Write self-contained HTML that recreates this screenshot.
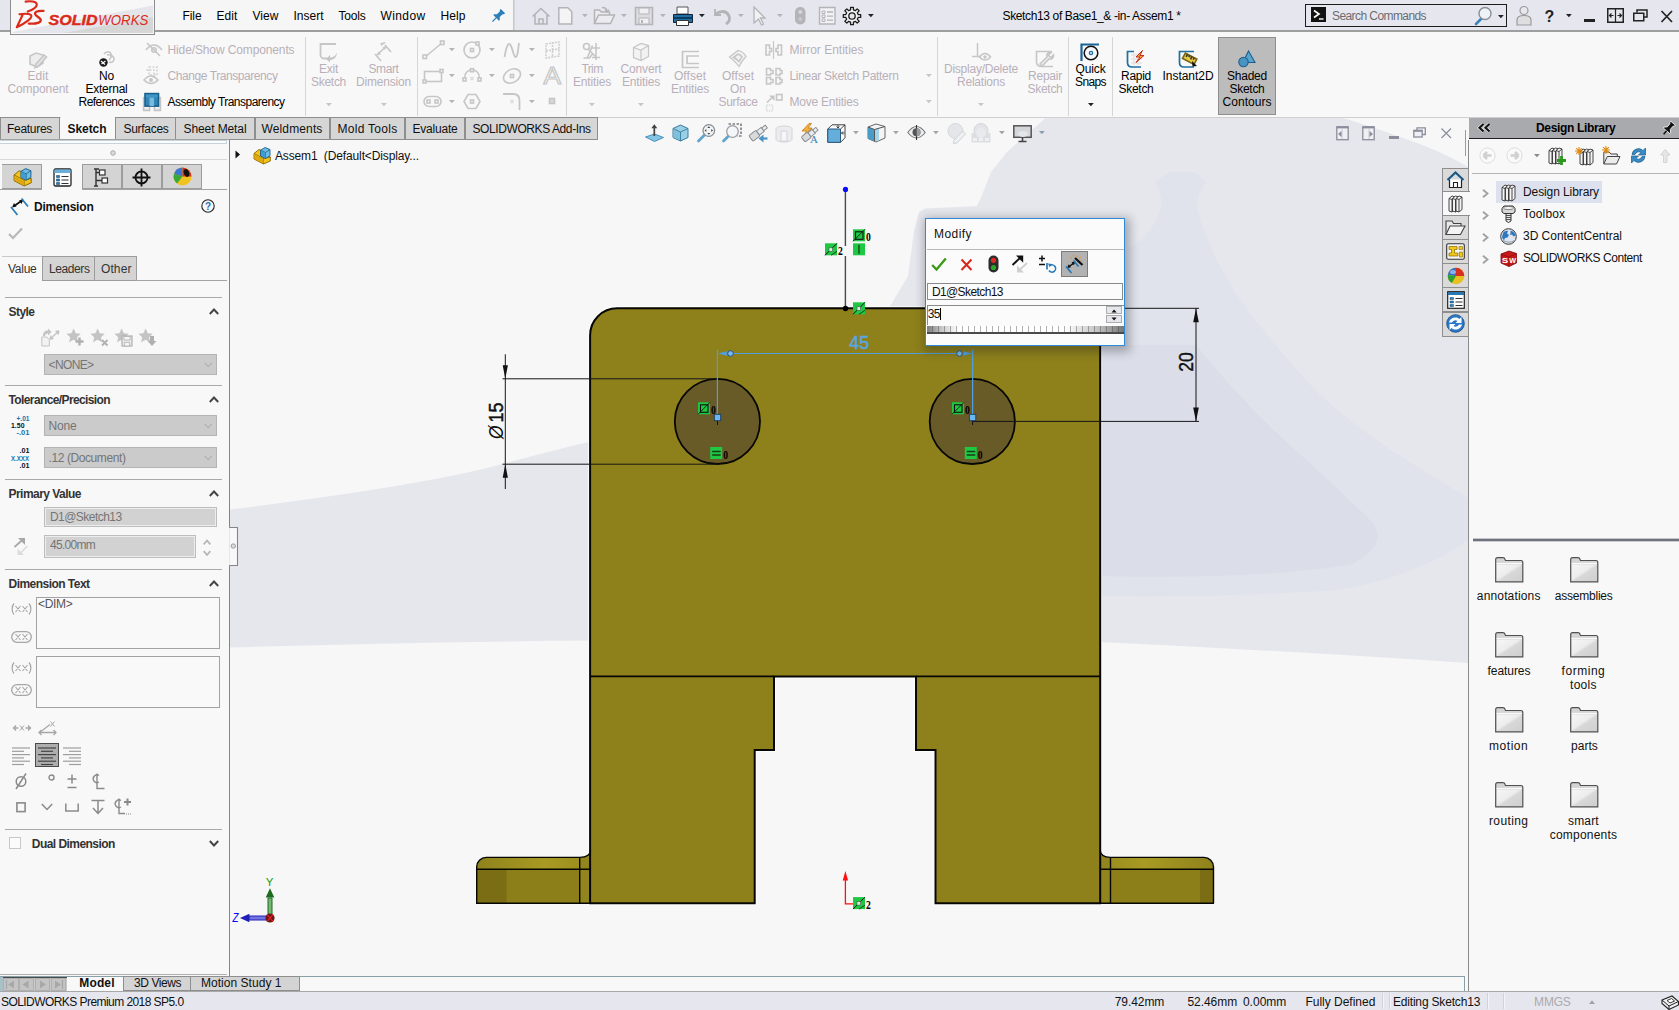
<!DOCTYPE html>
<html><head><meta charset="utf-8"><title>SOLIDWORKS</title>
<style>
html,body{margin:0;padding:0;}
body{width:1679px;height:1010px;overflow:hidden;background:#f7f7f7;position:relative;font:12px/14px "Liberation Sans",sans-serif;color:#000;}
.t{position:absolute;white-space:pre;font-size:12px;line-height:14px;font-family:"Liberation Sans",sans-serif;}
svg{overflow:visible;}
.rb svg{stroke-width:1.600px;}
</style></head><body>
<!-- g_title -->
<div style="position:absolute;left:0px;top:0px;width:1679px;height:30px;background:#e6e7ee;"></div>
<div style="position:absolute;left:0px;top:30px;width:1679px;height:1.5px;background:#9e9e9e;"></div>
<div style="position:absolute;left:155px;top:0px;width:358px;height:30px;background:#f6f6f6;"></div>
<div style="position:absolute;left:513px;top:0px;width:2px;height:30px;background:linear-gradient(90deg,#bfbfc4,#dcdde3);"></div>
<div style="position:absolute;left:155px;top:0px;width:358px;height:30px;background:#f6f6f6;"></div>
<div style="position:absolute;left:513px;top:0px;width:2px;height:30px;background:linear-gradient(90deg,#bfbfc4,#dcdde3);"></div>
<div style="position:absolute;left:10px;top:0px;width:144px;height:34px;background:linear-gradient(172deg,#ffffff 0%,#fdfdfd 48%,#dcdcdc 52%,#d4d4d4 100%);border:1px solid #8c8c8c;border-top:none;box-sizing:border-box;"></div>
<svg style="position:absolute;left:16px;top:0px;" width="140" height="32" viewBox="0 0 140 32"><g fill="none" stroke="#da291c" stroke-width="1.7" stroke-linecap="round" stroke-linejoin="round">
<path d="M8.5 3.2 C12 1.6 16.5 2 16.8 5.2 C17 8 13 11 8 13.2"/>
<path d="M12.2 3.5 L6.5 25.5 L1.2 25.8 C6 22 12 17 14.5 12"/>
<path d="M20.5 11.2 C17.5 10.2 13.2 11.2 13.2 14 C13.2 16.5 19.5 17 19.5 19.8 C19.5 22.6 14 22.8 11 21.6"/>
</g>
<text x="32" y="24.5" font-family="Liberation Sans,sans-serif" font-size="15.5" font-weight="bold" font-style="italic" fill="#da291c" textLength="56" lengthAdjust="spacingAndGlyphs">SOLID</text>
<text x="88.5" y="24.5" font-family="Liberation Sans,sans-serif" font-size="15.5" font-style="italic" fill="#da291c" textLength="44" lengthAdjust="spacingAndGlyphs">WORKS</text></svg>
<span class="t" style="left:182.5px;top:9.3px;letter-spacing:-0.084px;">File</span>
<span class="t" style="left:216.5px;top:9.3px;letter-spacing:0.081px;">Edit</span>
<span class="t" style="left:252.5px;top:9.3px;letter-spacing:0.052px;">View</span>
<span class="t" style="left:293.5px;top:9.3px;letter-spacing:-0.002px;">Insert</span>
<span class="t" style="left:338.5px;top:9.3px;letter-spacing:-0.202px;">Tools</span>
<span class="t" style="left:380.5px;top:9.3px;letter-spacing:0.387px;">Window</span>
<span class="t" style="left:440.5px;top:9.3px;letter-spacing:0.080px;">Help</span>
<svg style="position:absolute;left:489px;top:7px;" width="18" height="18" viewBox="0 0 18 18"><g transform="rotate(45 9 9)"><path d="M6 2h6v1.5l-1 1v4l2 2v1.2H5V10.5l2-2v-4l-1-1z" fill="#2c7fb8"/><path d="M9 11.7V17" stroke="#2c7fb8" stroke-width="1.3"/></g></svg>
<svg style="position:absolute;left:531px;top:6px;" width="20" height="20" viewBox="0 0 20 20"><path d="M1.5 10.5L10 2.5l8.5 8M4 9v9h12V9M8 18v-5h4v5" fill="none" stroke="#b4b4b8" stroke-width="1.6"/></svg>
<svg style="position:absolute;left:557px;top:6px;" width="18" height="20" viewBox="0 0 18 20"><path d="M1.8 1.8h9l4 4V18H1.8z" fill="#f4f4f6" stroke="#b4b4b8" stroke-width="1.5"/></svg>
<svg style="position:absolute;left:582.1px;top:13.5px" width="5.8" height="3.2"><path d="M0 0H5.8L2.9 3.2Z" fill="#b4b4b8"/></svg>
<svg style="position:absolute;left:593px;top:6px;" width="24" height="20" viewBox="0 0 24 20"><path d="M1.5 17.5V4h5l2 2h8v3M1.5 17.5l4-8.5h16l-4 8.5z" fill="#ececf0" stroke="#b4b4b8" stroke-width="1.5"/><path d="M9 1.5c3 0 5 1 5 4M12 4l2 2 2-2.3" fill="none" stroke="#b4b4b8" stroke-width="1.3"/></svg>
<svg style="position:absolute;left:621.1px;top:13.5px" width="5.8" height="3.2"><path d="M0 0H5.8L2.9 3.2Z" fill="#b4b4b8"/></svg>
<svg style="position:absolute;left:634px;top:6px;" width="20" height="20" viewBox="0 0 20 20"><path d="M1.5 1.5h17v17h-17z" fill="#dcdce0" stroke="#b4b4b8" stroke-width="1.5"/><path d="M5 2h10v6H5zM5 12h10v6H5z" fill="#f0f0f3" stroke="#b4b4b8"/><path d="M7 14h2v3H7z" fill="#b4b4b8"/></svg>
<svg style="position:absolute;left:660.1px;top:13.5px" width="5.8" height="3.2"><path d="M0 0H5.8L2.9 3.2Z" fill="#b4b4b8"/></svg>
<svg style="position:absolute;left:672px;top:5px;" width="22" height="22" viewBox="0 0 22 22"><path d="M5 2h11v7H5z" fill="#fff" stroke="#555" stroke-width="1"/><path d="M1.5 9.5h19v8h-19z" fill="#1d6fa5" stroke="#123" stroke-width="1"/><path d="M1.5 13h19" stroke="#0b3c5d" stroke-width="2"/><path d="M4.5 15.5h12v5h-12z" fill="#fff" stroke="#333" stroke-width="1"/></svg>
<svg style="position:absolute;left:699.1px;top:13.5px" width="5.8" height="3.2"><path d="M0 0H5.8L2.9 3.2Z" fill="#222"/></svg>
<svg style="position:absolute;left:711px;top:6px;" width="22" height="20" viewBox="0 0 22 20"><path d="M4 3v6h6" fill="none" stroke="#b4b4b8" stroke-width="1.8"/><path d="M4.5 9c3-4 10-5 13 0 2 3.5 1 7-2.500 9" fill="none" stroke="#b4b4b8" stroke-width="3"/></svg>
<svg style="position:absolute;left:738.1px;top:13.5px" width="5.8" height="3.2"><path d="M0 0H5.8L2.9 3.2Z" fill="#b4b4b8"/></svg>
<svg style="position:absolute;left:752px;top:5px;" width="18" height="22" viewBox="0 0 18 22"><path d="M2 2l11 11H8.500l3 6-2 1-3-6-4.500 4z" fill="#f2f2f5" stroke="#b4b4b8" stroke-width="1.3"/></svg>
<svg style="position:absolute;left:777.1px;top:13.5px" width="5.8" height="3.2"><path d="M0 0H5.8L2.9 3.2Z" fill="#b4b4b8"/></svg>
<svg style="position:absolute;left:794px;top:6px;" width="13" height="20" viewBox="0 0 13 20"><rect x="1" y="1" width="10.500" height="17.500" rx="5" fill="#b4b4b8"/><circle cx="6.300" cy="6" r="2" fill="#d6d6da"/><circle cx="6.300" cy="13" r="2" fill="#c8c8cc"/></svg>
<svg style="position:absolute;left:818px;top:6px;" width="19" height="20" viewBox="0 0 19 20"><path d="M1.5 1.500h15.500v16.500H1.500z" fill="#f2f2f5" stroke="#b4b4b8" stroke-width="1.4"/><path d="M4 5h3v2.500H4zM4 9h3v2.500H4zM4 13h3v2.500H4z" fill="none" stroke="#b4b4b8"/><path d="M9 6h6M9 10.200h6M9 14.200h6" stroke="#b4b4b8" stroke-width="1.300"/></svg>
<svg style="position:absolute;left:842px;top:6px;" width="20" height="20" viewBox="0 0 20 20"><g transform="translate(10 10)"><path d="M-1.42 -6.14L-1.38 -8.69L1.38 -8.69L1.42 -6.14L3.34 -5.34L5.17 -7.12L7.12 -5.17L5.34 -3.34L6.14 -1.42L8.69 -1.38L8.69 1.38L6.14 1.42L5.34 3.34L7.12 5.17L5.17 7.12L3.34 5.34L1.42 6.14L1.38 8.69L-1.38 8.69L-1.42 6.14L-3.34 5.34L-5.17 7.12L-7.12 5.17L-5.34 3.34L-6.14 1.42L-8.69 1.38L-8.69 -1.38L-6.14 -1.42L-5.34 -3.34L-7.12 -5.17L-5.17 -7.12L-3.34 -5.34Z" fill="#f2f2f4" stroke="#1c1c1c" stroke-width="1.300" stroke-linejoin="round"/><circle r="3.200" fill="#e6e7ee" stroke="#1c1c1c" stroke-width="1.300"/></g></svg>
<svg style="position:absolute;left:868.1px;top:13.5px" width="5.8" height="3.2"><path d="M0 0H5.8L2.9 3.2Z" fill="#222"/></svg>
<span class="t" style="left:1002.5px;top:8.8px;letter-spacing:-0.366px;">Sketch13 of Base1_&amp; -in- Assem1 *</span>
<div style="position:absolute;left:1305px;top:4px;width:202px;height:22.5px;border:1.5px solid #1c1c1c;box-sizing:border-box;background:#e6e7ee;"></div>
<svg style="position:absolute;left:1311px;top:7px;" width="15" height="15" viewBox="0 0 15 15"><rect width="15" height="15" fill="#111"/><path d="M3 3.500l5 3.500-5 3.500" fill="none" stroke="#fff" stroke-width="1.600"/><path d="M8 12h4.500" stroke="#fff" stroke-width="1.400"/></svg>
<span class="t" style="left:1332.0px;top:8.8px;letter-spacing:-0.580px;color:#6c6c70;">Search Commands</span>
<svg style="position:absolute;left:1474px;top:6px;" width="19" height="19" viewBox="0 0 19 19"><path d="M8.500 11.500L2 18" stroke="#3b83bd" stroke-width="2.600" stroke-linecap="round"/><circle cx="11" cy="7.500" r="6" fill="#eef3f8" stroke="#8a8f96" stroke-width="1.400"/></svg>
<svg style="position:absolute;left:1497.6px;top:14.5px" width="5.8" height="3.2"><path d="M0 0H5.8L2.9 3.2Z" fill="#222"/></svg>
<svg style="position:absolute;left:1516px;top:5px;" width="16" height="21" viewBox="0 0 16 21"><circle cx="8" cy="5.500" r="4" fill="#e8e8ea" stroke="#9a9a9e" stroke-width="1.200"/><path d="M1 20v-5c0-3 3-4.500 7-4.500s7 1.500 7 4.500v5z" fill="#dedee0" stroke="#9a9a9e" stroke-width="1.200"/></svg>
<span class="t" style="left:1544.6px;top:9.5px;letter-spacing:0.000px;color:#222;font-weight:bold;font-size:16px;">?</span>
<svg style="position:absolute;left:1565.6px;top:13.5px" width="5.8" height="3.2"><path d="M0 0H5.8L2.9 3.2Z" fill="#222"/></svg>
<div style="position:absolute;left:1584px;top:19px;width:10.5px;height:3px;background:#222;"></div>
<svg style="position:absolute;left:1607px;top:8px;" width="17" height="15" viewBox="0 0 17 15"><rect x="0.750" y="0.750" width="15.500" height="13.500" fill="none" stroke="#222" stroke-width="1.500"/><path d="M8.500 1v13M2.500 7.500h4M10.500 7.500h4M4.500 5.500l-2 2 2 2M12.500 5.500l2 2-2 2" fill="none" stroke="#222" stroke-width="1.200"/></svg>
<svg style="position:absolute;left:1633px;top:9px;" width="15" height="13" viewBox="0 0 15 13"><path d="M4 3.500V1h10v7h-3" fill="none" stroke="#222" stroke-width="1.500"/><rect x="0.750" y="4.250" width="10" height="7.500" fill="none" stroke="#222" stroke-width="1.500"/></svg>
<svg style="position:absolute;left:1660px;top:10px;" width="14" height="13" viewBox="0 0 14 13"><path d="M1.500 1l10.500 11M12 1L1.500 12" stroke="#222" stroke-width="1.700"/></svg>
<!-- g_ribbon -->
<div class="rb"><div style="position:absolute;left:0px;top:31.5px;width:1679px;height:86px;background:#f8f8f8;"></div>
<div style="position:absolute;left:0px;top:116.5px;width:1679px;height:1.5px;background:#cfcfcf;"></div>
<span class="t" style="left:27.5px;top:68.8px;letter-spacing:0.081px;color:#b8b0b8;">Edit</span><span class="t" style="left:7.5px;top:81.8px;letter-spacing:-0.115px;color:#b8b0b8;">Component</span>
<span class="t" style="left:99.0px;top:68.8px;letter-spacing:-0.170px;">No</span><span class="t" style="left:85.5px;top:81.8px;letter-spacing:-0.252px;">External</span><span class="t" style="left:78.5px;top:94.8px;letter-spacing:-0.536px;">References</span>
<span class="t" style="left:167.5px;top:42.8px;letter-spacing:-0.120px;color:#b8b0b8;">Hide/Show Components</span>
<span class="t" style="left:167.5px;top:68.8px;letter-spacing:-0.424px;color:#b8b0b8;">Change Transparency</span>
<span class="t" style="left:167.5px;top:94.8px;letter-spacing:-0.526px;">Assembly Transparency</span>
<span class="t" style="left:319.0px;top:61.8px;letter-spacing:-0.251px;color:#b8b0b8;">Exit</span><span class="t" style="left:311.0px;top:74.8px;letter-spacing:-0.281px;color:#b8b0b8;">Sketch</span>
<span class="t" style="left:368.5px;top:61.8px;letter-spacing:-0.400px;color:#b8b0b8;">Smart</span><span class="t" style="left:356.0px;top:74.8px;letter-spacing:-0.187px;color:#b8b0b8;">Dimension</span>
<svg style="position:absolute;left:325.6px;top:102.5px" width="5.8" height="3.2"><path d="M0 0H5.8L2.9 3.2Z" fill="#c6c6c6"/></svg>
<svg style="position:absolute;left:380.6px;top:102.5px" width="5.8" height="3.2"><path d="M0 0H5.8L2.9 3.2Z" fill="#c6c6c6"/></svg>
<span class="t" style="left:581.5px;top:61.8px;letter-spacing:-0.636px;color:#b8b0b8;">Trim</span><span class="t" style="left:573.0px;top:74.8px;letter-spacing:-0.169px;color:#b8b0b8;">Entities</span>
<span class="t" style="left:620.5px;top:61.8px;letter-spacing:-0.145px;color:#b8b0b8;">Convert</span><span class="t" style="left:622.0px;top:74.8px;letter-spacing:-0.169px;color:#b8b0b8;">Entities</span>
<svg style="position:absolute;left:588.6px;top:102.5px" width="5.8" height="3.2"><path d="M0 0H5.8L2.9 3.2Z" fill="#c6c6c6"/></svg>
<svg style="position:absolute;left:637.6px;top:102.5px" width="5.8" height="3.2"><path d="M0 0H5.8L2.9 3.2Z" fill="#c6c6c6"/></svg>
<span class="t" style="left:674.0px;top:68.8px;letter-spacing:0.035px;color:#b8b0b8;">Offset</span><span class="t" style="left:671.0px;top:81.8px;letter-spacing:-0.169px;color:#b8b0b8;">Entities</span>
<span class="t" style="left:722.0px;top:68.8px;letter-spacing:0.035px;color:#b8b0b8;">Offset</span><span class="t" style="left:730.0px;top:81.8px;letter-spacing:-0.003px;color:#b8b0b8;">On</span><span class="t" style="left:718.5px;top:94.8px;letter-spacing:-0.336px;color:#b8b0b8;">Surface</span>
<span class="t" style="left:789.5px;top:42.8px;letter-spacing:-0.000px;color:#b8b0b8;">Mirror Entities</span>
<span class="t" style="left:789.5px;top:68.8px;letter-spacing:-0.304px;color:#b8b0b8;">Linear Sketch Pattern</span>
<span class="t" style="left:789.5px;top:94.8px;letter-spacing:-0.233px;color:#b8b0b8;">Move Entities</span>
<svg style="position:absolute;left:925.6px;top:73.5px" width="5.8" height="3.2"><path d="M0 0H5.8L2.9 3.2Z" fill="#c6c6c6"/></svg>
<svg style="position:absolute;left:925.6px;top:99.5px" width="5.8" height="3.2"><path d="M0 0H5.8L2.9 3.2Z" fill="#c6c6c6"/></svg>
<span class="t" style="left:944.0px;top:61.8px;letter-spacing:-0.240px;color:#b8b0b8;">Display/Delete</span><span class="t" style="left:957.0px;top:74.8px;letter-spacing:-0.225px;color:#b8b0b8;">Relations</span>
<svg style="position:absolute;left:977.6px;top:102.5px" width="5.8" height="3.2"><path d="M0 0H5.8L2.9 3.2Z" fill="#c6c6c6"/></svg>
<span class="t" style="left:1028.0px;top:68.8px;letter-spacing:-0.225px;color:#b8b0b8;">Repair</span><span class="t" style="left:1027.5px;top:81.8px;letter-spacing:-0.281px;color:#b8b0b8;">Sketch</span>
<span class="t" style="left:1075.5px;top:61.8px;letter-spacing:-0.135px;">Quick</span><span class="t" style="left:1075.0px;top:74.8px;letter-spacing:-0.605px;">Snaps</span>
<svg style="position:absolute;left:1087.6px;top:102.5px" width="5.8" height="3.2"><path d="M0 0H5.8L2.9 3.2Z" fill="#222"/></svg>
<div style="position:absolute;left:1218px;top:37px;width:58px;height:78px;background:#bcbcbc;border:1px solid #8e8e8e;box-sizing:border-box;"></div>
<span class="t" style="left:1121.0px;top:68.8px;letter-spacing:-0.270px;">Rapid</span><span class="t" style="left:1118.5px;top:81.8px;letter-spacing:-0.281px;">Sketch</span>
<span class="t" style="left:1162.5px;top:68.8px;letter-spacing:-0.040px;">Instant2D</span>
<span class="t" style="left:1227.0px;top:68.8px;letter-spacing:-0.228px;">Shaded</span><span class="t" style="left:1229.5px;top:81.8px;letter-spacing:-0.281px;">Sketch</span><span class="t" style="left:1222.5px;top:94.8px;letter-spacing:0.039px;">Contours</span>
<div style="position:absolute;left:305px;top:37px;width:1px;height:79px;background:#d6d6d6;"></div>
<div style="position:absolute;left:417px;top:37px;width:1px;height:79px;background:#d6d6d6;"></div>
<div style="position:absolute;left:566px;top:37px;width:1px;height:79px;background:#d6d6d6;"></div>
<div style="position:absolute;left:937px;top:37px;width:1px;height:79px;background:#d6d6d6;"></div>
<div style="position:absolute;left:1068px;top:37px;width:1px;height:79px;background:#d6d6d6;"></div>
<div style="position:absolute;left:1112px;top:37px;width:1px;height:79px;background:#d6d6d6;"></div>
<svg style="position:absolute;left:28px;top:50px;" width="20" height="20" viewBox="0 0 20 20"><path d="M2 6l6-3 7 2v8l-6 4-7-3z" fill="#ededed" stroke="#c6c6c6"/><path d="M8 14l8-9 2.500 2-8 9-3.500 1.500z" fill="#e4e4e4" stroke="#c6c6c6"/></svg>
<svg style="position:absolute;left:98px;top:50px;" width="20" height="20" viewBox="0 0 20 20"><path d="M6 4c2-3 6-3 7 0s-1 5-2 6M9 5c3-1 7 1 7 4s-3 4-5 3" fill="none" stroke="#c6c6c6" stroke-width="1.600"/><circle cx="5.500" cy="12.500" r="4.200" fill="#1a1a1a"/><path d="M3 11l4 3.500M3.500 14l4-3" stroke="#fff" stroke-width="1.200"/></svg>
<svg style="position:absolute;left:145px;top:42px;" width="18" height="16" viewBox="0 0 18 16"><path d="M1 8c3-4 6-5 8-5s5 1 8 5" fill="none" stroke="#c6c6c6"/><circle cx="9" cy="8" r="2.200" fill="none" stroke="#c6c6c6"/><path d="M2 1l13 13" stroke="#c6c6c6" stroke-width="1.600"/></svg>
<svg style="position:absolute;left:143px;top:66px;" width="20" height="20" viewBox="0 0 20 20"><path d="M6 1h8v8H6zM3 4h8v8" fill="none" stroke="#c6c6c6" stroke-dasharray="2 1.500" opacity=".7"/><path d="M1 14c3-3.500 5-4 7-4s4 .500 7 4c-3 3-5 3.500-7 3.500S4 17 1 14z" fill="none" stroke="#c6c6c6"/><circle cx="8" cy="14" r="2" fill="#c6c6c6"/></svg>
<svg style="position:absolute;left:143px;top:93px;" width="18" height="18" viewBox="0 0 18 18"><path d="M0.600 4.600h6v12.800h-6zM11.400 4.600h6v12.800h-6z" fill="#f0f0f0" stroke="#c4c4c4"/><rect x="2" y="0.600" width="13.500" height="12.500" fill="#2f86b8" stroke="#1c5f88"/><path d="M6.500 4.500h4.500v8.600H6.500z" fill="#7db9da"/><path d="M3 1.500h11.500v3H3z" fill="#3f97c8"/></svg>
<svg style="position:absolute;left:319px;top:43px;" width="20" height="19" viewBox="0 0 20 19"><path d="M17 1H1.500v11c0 2 2 3.500 4 3.500h3" fill="none" stroke="#c6c6c6" stroke-width="1.800"/><path d="M18 9c-1 4-4 5.500-7 5.500v-2.500l-4 4 4 3.500v-2.500c4 0 7-3 7-8z" fill="#c6c6c6"/></svg>
<svg style="position:absolute;left:373px;top:42px;" width="20" height="20" viewBox="0 0 20 20"><path d="M2 12l6 7M12 3l6 7M4 13l9-8.500" fill="none" stroke="#c6c6c6" stroke-width="1.600"/><path d="M4 13l4-.500-2.500-3zM13.500 4.500l-4 .500 2.500 3z" fill="#c6c6c6"/><path d="M9 2l3-1.500M8 1l1 2.500" fill="none" stroke="#c6c6c6"/></svg>
<svg style="position:absolute;left:422px;top:40px;" width="24" height="20" viewBox="0 0 24 20"><path d="M3 17L20 3" fill="none" stroke="#c6c6c6" stroke-width="1.500"/><rect x="1" y="15" width="3.500" height="3.500" fill="#f8f8f8" stroke="#c6c6c6"/><rect x="18.500" y="1" width="3.500" height="3.500" fill="#f8f8f8" stroke="#c6c6c6"/></svg>
<svg style="position:absolute;left:422px;top:68px;" width="24" height="16" viewBox="0 0 24 16"><rect x="2.500" y="3.500" width="17" height="10" fill="none" stroke="#c6c6c6" stroke-width="1.600"/><rect x="1" y="12" width="3" height="3" fill="#f8f8f8" stroke="#c6c6c6"/><rect x="18" y="1.500" width="3" height="3" fill="#f8f8f8" stroke="#c6c6c6"/></svg>
<svg style="position:absolute;left:423px;top:95px;" width="20" height="13" viewBox="0 0 20 13"><rect x="1" y="1.500" width="17" height="10" rx="5" fill="none" stroke="#c6c6c6" stroke-width="1.600"/><rect x="4" y="5" width="3" height="3" fill="none" stroke="#c6c6c6"/><rect x="12" y="5" width="3" height="3" fill="none" stroke="#c6c6c6"/></svg>
<svg style="position:absolute;left:448.6px;top:47.5px" width="5.8" height="3.2"><path d="M0 0H5.8L2.9 3.2Z" fill="#b4b4b4"/></svg>
<svg style="position:absolute;left:448.6px;top:73.5px" width="5.8" height="3.2"><path d="M0 0H5.8L2.9 3.2Z" fill="#b4b4b4"/></svg>
<svg style="position:absolute;left:448.6px;top:99.5px" width="5.8" height="3.2"><path d="M0 0H5.8L2.9 3.2Z" fill="#b4b4b4"/></svg>
<svg style="position:absolute;left:462px;top:40px;" width="20" height="19" viewBox="0 0 20 19"><circle cx="10" cy="10" r="8" fill="none" stroke="#c6c6c6" stroke-width="1.600"/><rect x="8.500" y="8.500" width="3" height="3" fill="none" stroke="#c6c6c6"/><rect x="14" y="2" width="3" height="3" fill="#f8f8f8" stroke="#c6c6c6"/></svg>
<svg style="position:absolute;left:462px;top:68px;" width="20" height="14" viewBox="0 0 20 14"><path d="M2.500 10C3 4 6 2 10 2s7 2 7.500 8" fill="none" stroke="#c6c6c6" stroke-width="1.500"/><rect x="1" y="10" width="3" height="3" fill="#f8f8f8" stroke="#c6c6c6"/><rect x="16" y="10" width="3" height="3" fill="#f8f8f8" stroke="#c6c6c6"/><rect x="8.500" y="0.700" width="3" height="3" fill="#f8f8f8" stroke="#c6c6c6"/><path d="M8.500 9l3 3M11.500 9l-3 3" stroke="#dcdcdc"/></svg>
<svg style="position:absolute;left:463px;top:93px;" width="18" height="17" viewBox="0 0 18 17"><path d="M5 1.500h8l4 7-4 7H5l-4-7z" fill="none" stroke="#c6c6c6" stroke-width="1.600"/><rect x="7.500" y="7" width="3" height="3" fill="none" stroke="#c6c6c6"/></svg>
<svg style="position:absolute;left:488.6px;top:47.5px" width="5.8" height="3.2"><path d="M0 0H5.8L2.9 3.2Z" fill="#b4b4b4"/></svg>
<svg style="position:absolute;left:488.6px;top:73.5px" width="5.8" height="3.2"><path d="M0 0H5.8L2.9 3.2Z" fill="#b4b4b4"/></svg>
<svg style="position:absolute;left:503px;top:41px;" width="18" height="18" viewBox="0 0 18 18"><path d="M1.500 16C4 2 6 1 8 5s3 12 5 11S15 8 16 2" fill="none" stroke="#c6c6c6" stroke-width="1.800"/></svg>
<svg style="position:absolute;left:502px;top:67px;" width="20" height="18" viewBox="0 0 20 18"><ellipse cx="10" cy="9" rx="9" ry="6.500" transform="rotate(-30 10 9)" fill="none" stroke="#c6c6c6" stroke-width="1.600"/><rect x="8.500" y="7.500" width="3" height="3" fill="none" stroke="#c6c6c6"/></svg>
<svg style="position:absolute;left:503px;top:93px;" width="18" height="18" viewBox="0 0 18 18"><path d="M0 1h10c4 0 6.500 2.500 6.500 6.500V17" fill="none" stroke="#c6c6c6" stroke-width="1.800"/><path d="M7.500 7l3 3M10.500 7l-3 3" stroke="#dcdcdc"/></svg>
<svg style="position:absolute;left:528.6px;top:47.5px" width="5.8" height="3.2"><path d="M0 0H5.8L2.9 3.2Z" fill="#b4b4b4"/></svg>
<svg style="position:absolute;left:528.6px;top:73.5px" width="5.8" height="3.2"><path d="M0 0H5.8L2.9 3.2Z" fill="#b4b4b4"/></svg>
<svg style="position:absolute;left:528.6px;top:99.5px" width="5.8" height="3.2"><path d="M0 0H5.8L2.9 3.2Z" fill="#b4b4b4"/></svg>
<svg style="position:absolute;left:545px;top:40px;" width="16" height="20" viewBox="0 0 16 20"><path d="M1 4l13-2v14l-13 2zM7.500 2v16M1 11l13-2" fill="none" stroke="#d0d0d0" stroke-dasharray="2 1"/></svg>
<svg style="position:absolute;left:543px;top:66px;" width="19" height="19" viewBox="0 0 19 19"><text x="0.500" y="17.500" font-family="Liberation Sans,sans-serif" font-size="23" fill="#f8f8f8" stroke="#c6c6c6" stroke-width="1.100" textLength="17.500" lengthAdjust="spacingAndGlyphs">A</text></svg>
<svg style="position:absolute;left:549px;top:98px;" width="6" height="6" viewBox="0 0 6 6"><rect x="0.500" y="0.500" width="5" height="5" fill="#d8d8d8" stroke="#c6c6c6"/></svg>
<svg style="position:absolute;left:582px;top:42px;" width="20" height="20" viewBox="0 0 20 20"><circle cx="4.500" cy="4.500" r="3" fill="none" stroke="#c6c6c6" stroke-width="1.600"/><path d="M6 7l8 8M1.500 16h6l3-4M10.500 3.500l-5 12" fill="none" stroke="#c6c6c6" stroke-width="1.600"/><path d="M14 1v17M10 6h8M10 15.500h8" fill="none" stroke="#c6c6c6"/></svg>
<svg style="position:absolute;left:632px;top:42px;" width="18" height="20" viewBox="0 0 18 20"><path d="M1.500 5.500L9 1.500l7.500 2v11L9 18.500l-7.500-3zM1.500 5.500L9 8l7.500-4.500M9 8v10.500" fill="#f2f2f2" stroke="#c6c6c6" stroke-width="1.200"/></svg>
<svg style="position:absolute;left:681px;top:50px;" width="19" height="19" viewBox="0 0 19 19"><path d="M18 1.500H1.500V17.500h16.500M18 6H6v7.500h12" fill="none" stroke="#c6c6c6" stroke-width="1.700"/></svg>
<svg style="position:absolute;left:728px;top:49px;" width="20" height="19" viewBox="0 0 20 19"><path d="M1.500 8L10 1.500c3 .500 6 2.500 8 6-2 2-5 6-7 10-3-4-6-7-9.500-9.500z" fill="#f2f2f2" stroke="#c6c6c6" stroke-width="1.200"/><path d="M5.500 8.500L10 5c2 .500 3 1.500 4 3-1 1-2 3-3 4.500-1.500-1.500-3-3-5.500-4z" fill="none" stroke="#c6c6c6"/></svg>
<svg style="position:absolute;left:765px;top:41px;" width="18" height="18" viewBox="0 0 18 18"><path d="M8.500 0v18" stroke="#c6c6c6" stroke-width="1.200"/><path d="M1 4h3.500v3.500H6.500v3H4.500V14H1zM16.500 4H13v3.500h-2v3h2V14h3.500z" fill="none" stroke="#c6c6c6"/></svg>
<svg style="position:absolute;left:765px;top:67px;" width="18" height="18" viewBox="0 0 18 18"><path d="M1.500 1.500h4v2h2.500v3H5.500v1.500h-4zM11 1.500h4v2h2v3h-2v1.500h-4zM1.500 10.500h4v2h2.500v3H5.500V17h-4zM11 10.500h4v2h2v3h-2V17h-4z" fill="none" stroke="#c6c6c6"/></svg>
<svg style="position:absolute;left:765px;top:93px;" width="18" height="19" viewBox="0 0 18 19"><path d="M2 9.500l6-6" fill="none" stroke="#c6c6c6" stroke-width="1.600"/><path d="M4 2.500h5.500V8z" fill="#c6c6c6"/><rect x="11.500" y="1.500" width="5.500" height="5.500" fill="none" stroke="#c6c6c6" stroke-width="1.600"/><path d="M1.500 12h6v6h-6z" fill="none" stroke="#d6d6d6" stroke-dasharray="1.200 1.200"/></svg>
<svg style="position:absolute;left:971px;top:42px;" width="20" height="20" viewBox="0 0 20 20"><path d="M6.500 1v13.500M1 14.500h11" fill="none" stroke="#c6c6c6" stroke-width="1.500"/><path d="M8.500 15c2-3 4-3.500 5.500-3.500s3.500.500 5.500 3.500c-2 2.500-4 3-5.500 3s-3.500-.500-5.500-3z" fill="#f8f8f8" stroke="#c6c6c6"/><circle cx="14" cy="15" r="1.700" fill="#c6c6c6"/></svg>
<svg style="position:absolute;left:1035px;top:50px;" width="20" height="19" viewBox="0 0 20 19"><path d="M17 1.500H1.500v10c0 3 2 5 5 5H18" fill="none" stroke="#c6c6c6" stroke-width="1.600"/><path d="M5 14l7-7c-1-2.500 1-5 4-4.500l-2.500 2.500 1 1.500 1.500 1 2.500-2.500c.500 3-2 5-4.500 4l-7 7z" fill="#f0f0f0" stroke="#c6c6c6"/></svg>
<svg style="position:absolute;left:1080px;top:43px;" width="20" height="19" viewBox="0 0 20 19"><path d="M1.500 18V1.500H19" fill="none" stroke="#1a6496" stroke-width="2.200"/><circle cx="11" cy="10" r="6.800" fill="none" stroke="#111" stroke-width="1.500"/><circle cx="11" cy="10" r="1.600" fill="none" stroke="#1d6fa5" stroke-width="1.400"/></svg>
<svg style="position:absolute;left:1126px;top:50px;" width="20" height="19" viewBox="0 0 20 19"><path d="M8 1.500H1.500v11c0 3 2 4.500 4.500 4.500h9" fill="none" stroke="#1d6fa5" stroke-width="1.700"/><path d="M5 5h11M5 9h11M5 13h11M8 3v12M12 3v12" stroke="#e4e4e4"/><path d="M16.500 0.500l-6.500 6.500h4l-4 5.500 8-7h-4z" fill="#f0a030" stroke="#c02010" stroke-width=".900"/></svg>
<svg style="position:absolute;left:1178px;top:50px;" width="20" height="19" viewBox="0 0 20 19"><path d="M16 1.500H1.500v11c0 3 2 4.500 4.500 4.500h10" fill="none" stroke="#1d6fa5" stroke-width="1.700"/><g transform="rotate(28 11 9)"><rect x="5" y="5.500" width="13" height="6" fill="#e8c840" stroke="#7a6510"/><path d="M7.500 5.500v3M10 5.500v2M12.500 5.500v3M15 5.500v2" stroke="#333"/></g><path d="M14 11l5 5-4.500.500z" fill="#111"/></svg>
<svg style="position:absolute;left:1238px;top:50px;" width="18" height="18" viewBox="0 0 18 18"><path d="M10.500 1L17 12.500H5z" fill="#5aa4d0" stroke="#1d5f8a" stroke-width="1.100"/><circle cx="5.500" cy="12" r="4.700" fill="#4a94c4" stroke="#1d5f8a" stroke-width="1.100"/></svg></div><div style="position:absolute;left:10px;top:0px;width:145px;height:34.5px;background:#f7f7f7;border:1.200px solid #8c8c8c;border-top:none;box-sizing:border-box;overflow:hidden;"><svg width="143" height="33" style="position:absolute;left:0;top:0"><path d="M1.500 32L142 5.500V33H1.500z" fill="#e5e6eb"/><path d="M52 33L142 17V33z" fill="#d6d6d6"/></svg></div><svg style="position:absolute;left:16px;top:0px;" width="140" height="32" viewBox="0 0 140 32"><g fill="none" stroke="#dc2a1a" stroke-linecap="round" stroke-linejoin="round">
<path d="M9.600 1.600 C14 0.800 20.500 1.400 20.800 4.300 C21 7 16.500 9.800 11.800 11.600" stroke-width="2.100"/>
<path d="M3.500 14.200 C8 13.600 13 13.400 15 15 C17.500 17.500 9 23.500 0.800 27.200 L6.800 14.500" stroke-width="2.100"/>
<path d="M27.500 10.900 C23.500 10.600 19.300 11.300 19 13.500 C18.700 16 25 17.500 24.800 20.300 C24.600 23 18 23.800 12.800 23.600" stroke-width="2.300"/>
</g>
<text x="32.600" y="24.600" font-family="Liberation Sans,sans-serif" font-size="15" font-weight="bold" font-style="italic" fill="#dc2a1a" stroke="#dc2a1a" stroke-width=".400" textLength="49" lengthAdjust="spacingAndGlyphs">SOLID</text>
<text x="82.300" y="24.600" font-family="Liberation Sans,sans-serif" font-size="15" font-style="italic" fill="#dc2a1a" textLength="50" lengthAdjust="spacingAndGlyphs">WORKS</text></svg>
<!-- g_view -->
<svg style="position:absolute;left:0;top:0" width="1679" height="1010" viewBox="0 0 1679 1010"><rect x="230" y="118" width="1238" height="857" fill="#f7f7f7"/><path d="M230 509.500 Q330 497 396 486 T501.600 464.300 T590 441.600 L889 340 L889 308 L908 276 L914 231 L919 212 L925 208.500 L977 206 L982 195 L991 172 L1007 152 L1045.500 118 L1468 118 L1468 663 Q1290 651 1100 642 L590 640.600 Q400 642 230 647.500Z" fill="#e6e7ed"/><path d="M1343 118L1468 118L1468 167Q1440 150 1400 137Q1370 126 1343 118Z" fill="#f7f7f7"/><path d="M1170 172 L1195 172 L1206 182 Q1196 196 1197 208 Q1204 240 1234 291 Q1272 345 1320 395 Q1365 435 1413 464 L1468 498 L1468 540 Q1420 575 1340 590 Q1220 598 1100 596 L1100 330 L1125 300 L1125 250 Q1150 240 1161 208 Q1163 195 1155 182Z" fill="#e0e3eb"/><path d="M1100 345 L1196 345 Q1240 400 1292 447 Q1340 490 1372 522 Q1390 545 1350 565 Q1250 580 1100 576Z" fill="#dbdee8"/><path d="M590.100 903.200V335.300A27 27 0 0 1 617.100 308.300H1100.200V903.200H935.500V750H916V676.400H774V750H754.700V903.200Z" fill="none" stroke="#ffffff" stroke-width="4" opacity=".850"/><path d="M590.100 903.200V335.300A27 27 0 0 1 617.100 308.300H1100.200V903.200H935.500V750H916V676.400H774V750H754.700V903.200Z" fill="#8e811c"/><defs><linearGradient id="ft" x1="0" x2="1"><stop offset="0" stop-color="#8f821c"/><stop offset=".600" stop-color="#a89a22"/><stop offset="1" stop-color="#9a8c1e"/></linearGradient><linearGradient id="ft2" x1="1" x2="0"><stop offset="0" stop-color="#8f821c"/><stop offset=".600" stop-color="#a89a22"/><stop offset="1" stop-color="#9a8c1e"/></linearGradient></defs><path d="M476.700 903.200V867A9.500 9.500 0 0 1 486.200 857.400H579.700Q590.500 857 590.500 850V903.200Z" fill="#8c7f1a"/><path d="M1213.500 903.200V867A9.500 9.500 0 0 0 1204 857.400H1110.500Q1100.200 857 1100.200 850V903.200Z" fill="#8c7f1a"/><path d="M476.700 869.300V867A9.500 9.500 0 0 1 486.200 857.400H579.700Q590.500 857 590.500 850V869.300Z" fill="url(#ft)"/><path d="M1213.500 869.300V867A9.500 9.500 0 0 0 1204 857.400H1110.500Q1100.200 857 1100.200 850V869.300Z" fill="url(#ft2)"/><rect x="477" y="869.300" width="29.500" height="34" fill="#7a6d14"/><rect x="1200" y="869.300" width="13.500" height="34" fill="#7a6d14"/><rect x="580" y="857" width="10.500" height="46" fill="#92851d"/><rect x="1100" y="857" width="10.500" height="46" fill="#92851d"/><path d="M590.100 903.200V335.300A27 27 0 0 1 617.100 308.300H1100.200V903.200H935.500V750H916V676.400H774V750H754.700V903.200Z" fill="none" stroke="#060604" stroke-width="2" stroke-linejoin="miter"/><path d="M590.100 676.400H774M916 676.400H1100.200" fill="none" stroke="#060604" stroke-width="1.600"/><path d="M476 903.200H590.500M476.700 903.200V867A9.500 9.500 0 0 1 486.200 857.400H579.700Q590.500 857 590.500 850M476.700 869.300H590.500M579.700 857.400V903.200" fill="none" stroke="#060604" stroke-width="1.400"/><path d="M1214 903.200H1100.200M1213.500 903.200V867A9.500 9.500 0 0 0 1204 857.400H1110.500Q1100.200 857 1100.200 850M1213.500 869.300H1100.200M1110.500 857.400V903.200" fill="none" stroke="#060604" stroke-width="1.400"/><circle cx="717.4" cy="421.400" r="42.600" fill="#695b28" stroke="#060604" stroke-width="1.800"/><circle cx="972.3" cy="421.400" r="42.600" fill="#695b28" stroke="#060604" stroke-width="1.800"/><path d="M502.500 378.800H717.400M502.500 464.200H717.400M505.300 354.300V489" stroke="#151515" stroke-width="1" fill="none"/><path d="M505.300 378.800l-2.600-13.500h5.200zM505.300 464.200l-2.600 13.500h5.200z" fill="#111"/><path d="M1125 308.300H1199M972.300 421.400H1199M1196 308.300V421.400" stroke="#151515" stroke-width="1" fill="none"/><path d="M1196 308.300l-2.800 14h5.600zM1196 421.400l-2.800-14h5.600z" fill="#111"/><g transform="translate(503 438.500) rotate(-90)"><text x="-0.500" y="-0.300" font-family="Liberation Sans,sans-serif" font-size="19.500" font-style="italic" fill="#111" textLength="13.500" lengthAdjust="spacingAndGlyphs">Ø</text><text x="16" y="0" font-family="Liberation Sans,sans-serif" font-size="20.500" fill="#111" stroke="#111" stroke-width=".450" textLength="20" lengthAdjust="spacingAndGlyphs">15</text></g><g transform="translate(1193.300 371.700) rotate(-90)"><text x="0" y="0" font-family="Liberation Sans,sans-serif" font-size="20.500" fill="#111" stroke="#111" stroke-width=".450" textLength="19.500" lengthAdjust="spacingAndGlyphs">20</text></g><path d="M717.400 349.800V414M972.600 349.800V414M730.500 353.500H959.500" stroke="#4f9fe0" stroke-width="1.200" fill="none"/><path d="M717.800 353.500l9-2.200v4.400zM972.200 353.500l-9-2.200v4.400z" fill="#4f9fe0"/><circle cx="730.5" cy="353.500" r="2.800" fill="#7ab8ee" stroke="#1d4f80" stroke-width=".900"/><circle cx="959.5" cy="353.500" r="2.800" fill="#7ab8ee" stroke="#1d4f80" stroke-width=".900"/><text x="849.300" y="349.300" font-family="Liberation Sans,sans-serif" font-size="17.500" fill="#58a6e6" stroke="#58a6e6" stroke-width=".500" textLength="19.700" lengthAdjust="spacingAndGlyphs">45</text><path d="M717.5 421v4" stroke="#111" stroke-width="1"/><rect x="714.3" y="414.300" width="6.400" height="6.400" fill="#6cb6f2" stroke="#1a3c60" stroke-width=".900"/><path d="M972.6 421v4" stroke="#111" stroke-width="1"/><rect x="969.4" y="414.300" width="6.400" height="6.400" fill="#6cb6f2" stroke="#1a3c60" stroke-width=".900"/><g transform="translate(698 402.3)"><rect width="12" height="12" fill="#1ec843"/><rect x="2.500" y="2.500" width="7.500" height="7.500" fill="none" stroke="#111" stroke-width="1.100"/><path d="M0 12L12 0" stroke="#111" stroke-width=".900"/></g><text x="711" y="414.3" font-family="Liberation Serif,serif" font-size="11.500" font-weight="bold" fill="#000" textLength="4.800" lengthAdjust="spacingAndGlyphs">0</text><g transform="translate(952 402.3)"><rect width="12" height="12" fill="#1ec843"/><rect x="2.500" y="2.500" width="7.500" height="7.500" fill="none" stroke="#111" stroke-width="1.100"/><path d="M0 12L12 0" stroke="#111" stroke-width=".900"/></g><text x="965" y="414.3" font-family="Liberation Serif,serif" font-size="11.500" font-weight="bold" fill="#000" textLength="4.800" lengthAdjust="spacingAndGlyphs">0</text><g transform="translate(710.2 447)"><rect width="12" height="12" fill="#1ec843"/><path d="M2 4.500h8.500M2 8h8.500" stroke="#1a3a1a" stroke-width="1.300"/></g><text x="723.2" y="459" font-family="Liberation Serif,serif" font-size="11.500" font-weight="bold" fill="#000" textLength="4.800" lengthAdjust="spacingAndGlyphs">0</text><g transform="translate(964.8 447)"><rect width="12" height="12" fill="#1ec843"/><path d="M2 4.500h8.500M2 8h8.500" stroke="#1a3a1a" stroke-width="1.300"/></g><text x="977.8" y="459" font-family="Liberation Serif,serif" font-size="11.500" font-weight="bold" fill="#000" textLength="4.800" lengthAdjust="spacingAndGlyphs">0</text><path d="M845.400 190V246M845.400 256V308" stroke="#4a4a4a" stroke-width="1.400"/><circle cx="845.500" cy="189.400" r="2.600" fill="#0a0aff"/><circle cx="845.500" cy="308.500" r="2.700" fill="#000"/><g transform="translate(853 229.3)"><rect width="12" height="12" fill="#1ec843"/><rect x="2.500" y="2.500" width="7.500" height="7.500" fill="none" stroke="#111" stroke-width="1.100"/><path d="M0 12L12 0" stroke="#111" stroke-width=".900"/></g><text x="866" y="241.3" font-family="Liberation Serif,serif" font-size="11.500" font-weight="bold" fill="#000" textLength="4.800" lengthAdjust="spacingAndGlyphs">0</text><g transform="translate(853 243.3)"><rect width="12" height="12" fill="#1ec843"/><path d="M6 1.500v9" stroke="#1a3a1a" stroke-width="1.300"/></g><g transform="translate(825 243.3)"><rect width="12" height="12" fill="#1ec843"/><path d="M0 12L12 0" stroke="#111" stroke-width="1"/><path d="M6 12L12 8" stroke="#111" stroke-width=".700"/><rect x="4" y="4.500" width="3.500" height="3.500" fill="#d8f0d8" stroke="#555" stroke-width=".600"/></g><text x="838" y="255.3" font-family="Liberation Serif,serif" font-size="11.500" font-weight="bold" fill="#000" textLength="4.800" lengthAdjust="spacingAndGlyphs">2</text><g transform="translate(853 302.3)"><rect width="12" height="12" fill="#1ec843"/><path d="M0 12L12 0" stroke="#111" stroke-width="1"/><path d="M6 12L12 8" stroke="#111" stroke-width=".700"/><rect x="4" y="4.500" width="3.500" height="3.500" fill="#d8f0d8" stroke="#555" stroke-width=".600"/></g><path d="M845.400 880V903.900H853" stroke="#ff1010" stroke-width="1.300" fill="none"/><path d="M845.400 871l-2.700 9.500h5.400z" fill="#ff1010"/><g transform="translate(853 897.1)"><rect width="12" height="12" fill="#1ec843"/><path d="M0 12L12 0" stroke="#111" stroke-width="1"/><path d="M6 12L12 8" stroke="#111" stroke-width=".700"/><rect x="4" y="4.500" width="3.500" height="3.500" fill="#d8f0d8" stroke="#555" stroke-width=".600"/></g><text x="866" y="909.1" font-family="Liberation Serif,serif" font-size="11.500" font-weight="bold" fill="#000" textLength="4.800" lengthAdjust="spacingAndGlyphs">2</text><path d="M268 898h4v17h-4z" fill="#74b874" stroke="#1e6a1e" stroke-width="1"/><path d="M270 888.200l-4.300 9.300h8.600z" fill="#1e6a1e"/><path d="M249 916h18v4h-18z" fill="#7474e0" stroke="#2020b8" stroke-width="1"/><path d="M240 918l9.300-4.300v8.600z" fill="#2020b8"/><circle cx="270" cy="918" r="4.600" fill="#6a1818"/><path d="M267 914.500l6 7M273 914.500l-6 7" stroke="#ff2020" stroke-width="1.100"/><text x="265.800" y="886" font-family="Liberation Sans,sans-serif" font-size="11.500" fill="#10a010">Y</text><text x="232.500" y="922" font-family="Liberation Sans,sans-serif" font-size="12" font-style="italic" fill="#0000ff" textLength="6" lengthAdjust="spacingAndGlyphs">Z</text></svg>
<svg style="position:absolute;left:234.5px;top:150px;" width="6" height="9" viewBox="0 0 6 9"><path d="M0.500 0.500L5 4.500 0.500 8.500z" fill="#111"/></svg>
<svg style="position:absolute;left:253px;top:145.5px;" width="18.5" height="18.5" viewBox="0 0 18.500 18.500"><path d="M1 7.500L6 3.500l3.500 1.500v3.500L17.300 11v4L10.500 18 1 13z" fill="#f4c41c" stroke="#8a6400" stroke-width=".900" stroke-linejoin="round"/><path d="M1 7.500l9.500 5v5.500M10.500 12.500L17.300 11" fill="none" stroke="#8a6400" stroke-width=".800"/><path d="M1.500 8.200l9 4.800v4.500l-9-4.800z" fill="#e0a810"/><path d="M7.500 4.200L12 1.500l5 2v6.300L12.500 12.500 7.500 10z" fill="#6cbce6" stroke="#1d5f8a" stroke-width=".900" stroke-linejoin="round"/><path d="M7.500 4.200l5 2.300 4.500-3M12.500 6.500v6" fill="none" stroke="#1d5f8a" stroke-width=".800"/><path d="M8 4.800l4.500 2.100v5l-4.500-2.200z" fill="#3f9bd0"/></svg>
<span class="t" style="left:274.9px;top:148.8px;letter-spacing:-0.129px;color:#111;">Assem1  (Default&lt;Display...</span>
<!-- g_hud -->
<svg style="position:absolute;left:645px;top:124px;" width="19" height="18" viewBox="0 0 19 18"><path d="M0.500 13l9-3 9 3.500-9 4z" fill="#86c4e4" stroke="#3a88b8" stroke-width=".900"/><path d="M9.300 12V2.500" stroke="#444" stroke-width="1.700"/><path d="M9.300 0.300l-3 4h6z" fill="#444"/></svg>
<svg style="position:absolute;left:672px;top:124px;" width="17" height="18" viewBox="0 0 17 18"><path d="M1 4.500L8.500 1 16 4.500v9L8.500 17 1 13.500z" fill="#9ad0e6" stroke="#3a7a9c" stroke-width="1"/><path d="M1.500 5l7 3.300V16.500l-7-3.300z" fill="#7fc0dc"/><path d="M1 4.500l7.500 3.500L16 4.500M8.500 8v9" fill="none" stroke="#3a7a9c" stroke-width=".900"/></svg>
<svg style="position:absolute;left:696px;top:123px;" width="20" height="20" viewBox="0 0 20 20"><path d="M8.500 12L2.500 18" stroke="#62a4cc" stroke-width="2.800" stroke-linecap="round"/><circle cx="12.800" cy="7.500" r="5.800" fill="#f2f4f6" stroke="#8a8e94" stroke-width="1.300"/><path d="M12.800 3.300l-1.500 1.700h3zM12.800 11.700l-1.500-1.700h3zM8.600 7.500l1.700-1.500v3zM17 7.500l-1.700-1.500v3z" fill="#444"/></svg>
<svg style="position:absolute;left:721px;top:123px;" width="21" height="20" viewBox="0 0 21 20"><path d="M7.500 1h12.500v12h-4" fill="none" stroke="#444" stroke-width="1.100" stroke-dasharray="2.500 1.500"/><path d="M8 12.500L2.500 18" stroke="#62a4cc" stroke-width="2.800" stroke-linecap="round"/><circle cx="11.500" cy="8.500" r="5.800" fill="#f4f6f8" stroke="#9a9ea4" stroke-width="1.300"/></svg>
<svg style="position:absolute;left:749px;top:123px;" width="19" height="20" viewBox="0 0 19 20"><g transform="rotate(-38 9 10)"><rect x="0" y="6.500" width="9" height="7" rx="1.500" fill="#d8dadc" stroke="#8a8e92"/><rect x="9" y="7.500" width="6" height="5" fill="#e8eaec" stroke="#8a8e92"/><rect x="15" y="8.300" width="4.500" height="3.400" fill="#eef0f2" stroke="#8a8e92"/></g><path d="M18.500 15.500h-5" stroke="#4a94c8" stroke-width="2.200"/><path d="M9.500 15.500l5-4v8z" fill="#4a94c8"/></svg>
<svg style="position:absolute;left:775px;top:125px;" width="18" height="18" viewBox="0 0 18 18"><path d="M1 4c0-2 4-3 8-3s8 1 8 3v10c0 2-4 3-8 3s-8-1-8-3z" fill="#ececee" stroke="#d4d4d8"/><path d="M6 6h6v10H6z" fill="#f6f6f8" stroke="#d4d4d8"/></svg>
<svg style="position:absolute;left:800px;top:123px;" width="20" height="20" viewBox="0 0 20 20"><path d="M9 0.500L2 8h4.500L4 13l8-8H8l3.500-4.500z" fill="#f0b040" stroke="#c87818" stroke-width=".800"/><g transform="rotate(-38 9 11)"><rect x="1" y="8.500" width="8" height="6.500" rx="1.500" fill="#d8dadc" stroke="#8a8e92"/><rect x="9" y="9.300" width="5.500" height="5" fill="#e8eaec" stroke="#8a8e92"/><rect x="14.500" y="10" width="4" height="3.500" fill="#eef0f2" stroke="#8a8e92"/></g><text x="10" y="19.500" font-family="Liberation Serif,serif" font-size="11" fill="#3a80b8">A</text></svg>
<svg style="position:absolute;left:826.5px;top:123.5px;" width="19" height="19" viewBox="0 0 19 19"><path d="M5 0.800h13v13l-4.500 4.500H0.800V5z" fill="#fafafa" stroke="#444" stroke-width="1"/><path d="M0.800 5h12.700v13.300H0.800z" fill="#64aedc" stroke="#2a5a80" stroke-width="1"/><path d="M13.500 5L18 0.800M11 1v3M9.500 2.500l1.500 1.500 1.500-1.500M14.500 9h3M16 7.500L14.500 9l1.500 1.500" fill="none" stroke="#333" stroke-width=".900"/></svg>
<svg style="position:absolute;left:852.6px;top:131px" width="5.8" height="3.2"><path d="M0 0H5.8L2.9 3.2Z" fill="#a0a4aa"/></svg>
<svg style="position:absolute;left:867px;top:123px;" width="19" height="20" viewBox="0 0 19 20"><path d="M1 4L9 1l9 2.500v11.500L9 19 1 15.500z" fill="#f4f4f6" stroke="#666" stroke-width="1"/><path d="M1 4l6.500 2.500v12L1 15.500z" fill="#4a9cc8"/><path d="M7.500 6.500L12 5v12.500l-4.500 1z" fill="#a8d4ea"/><path d="M1 4l6.500 2.500L18 3.500M7.500 6.500v12" fill="none" stroke="#555" stroke-width="1"/></svg>
<svg style="position:absolute;left:892.6px;top:131px" width="5.8" height="3.2"><path d="M0 0H5.8L2.9 3.2Z" fill="#a0a4aa"/></svg>
<svg style="position:absolute;left:906.5px;top:125px;" width="19" height="15" viewBox="0 0 19 15"><path d="M0.800 7.500C4 3 7 1.500 9.500 1.500s5.500 1.500 8.700 6c-3.200 4-6.200 5.500-8.700 5.500S4 11.500 0.800 7.500z" fill="#eceef2" stroke="#777" stroke-width="1.100"/><circle cx="9.500" cy="7.300" r="4" fill="#555"/><path d="M9.500 0v15" stroke="#333" stroke-width="1.100"/><path d="M9.500 3.300a4 4 0 0 1 0 8z" fill="#9a9ca0"/></svg>
<svg style="position:absolute;left:932.6px;top:131px" width="5.8" height="3.2"><path d="M0 0H5.8L2.9 3.2Z" fill="#a0a4aa"/></svg>
<svg style="position:absolute;left:946.5px;top:123px;" width="20" height="20" viewBox="0 0 20 20"><circle cx="8.500" cy="8" r="7.500" fill="#e4e6ea" stroke="#d6d8dc"/><path d="M7 17l8.500-9 3 3-8.500 9-3.500.500z" fill="#eeeff2" stroke="#d0d2d6"/></svg>
<svg style="position:absolute;left:971px;top:123px;" width="20" height="20" viewBox="0 0 20 20"><circle cx="10" cy="7.500" r="7" fill="#e2e4e8" stroke="#d4d6da"/><path d="M0.500 10h19v9.500h-19z" fill="#dcdee2"/><path d="M2 15h4v3H2zM8 15h4v3H8zM14 15h4v3h-4z" fill="#f0f0f3"/><circle cx="10" cy="10" r="5" fill="#e8eaee"/></svg>
<svg style="position:absolute;left:998.6px;top:131px" width="5.8" height="3.2"><path d="M0 0H5.8L2.9 3.2Z" fill="#a0a4aa"/></svg>
<svg style="position:absolute;left:1012.5px;top:124.5px;" width="19" height="18" viewBox="0 0 19 18"><rect x="0.800" y="0.800" width="17.400" height="11.500" fill="#d4d6da" stroke="#555" stroke-width="1.500"/><ellipse cx="10" cy="9" rx="5" ry="3" fill="#e4e6ea"/><path d="M9.500 12.500v3.500M5.500 16.500h8" stroke="#444" stroke-width="1.600"/></svg>
<svg style="position:absolute;left:1038.6px;top:131px" width="5.8" height="3.2"><path d="M0 0H5.8L2.9 3.2Z" fill="#8aa0ac"/></svg>
<svg style="position:absolute;left:1335.5px;top:126px;" width="13" height="14.5" viewBox="0 0 13 14.5"><rect x="0.800" y="0.800" width="11.400" height="12.900" fill="#f0f0f4" stroke="#8b8d9c" stroke-width="1.300"/><path d="M0.800 1.500h11.400" stroke="#8b8d9c" stroke-width="1.800"/><path d="M6 3v10" stroke="#c8cad2"/><path d="M5.500 5L2 8l3.500 3z" fill="#8b8d9c"/></svg>
<svg style="position:absolute;left:1362px;top:126px;" width="13" height="14.5" viewBox="0 0 13 14.5"><rect x="0.800" y="0.800" width="11.400" height="12.900" fill="#f0f0f4" stroke="#8b8d9c" stroke-width="1.300"/><path d="M0.800 1.500h11.400" stroke="#8b8d9c" stroke-width="1.800"/><path d="M7 3v10" stroke="#c8cad2"/><path d="M7.500 5L11 8l-3.500 3z" fill="#8b8d9c"/></svg>
<div style="position:absolute;left:1389px;top:136px;width:10px;height:3px;background:#8b8d9c;"></div>
<svg style="position:absolute;left:1413px;top:127px;" width="13" height="11" viewBox="0 0 13 11"><path d="M4 3V0.800h8.300v6.700H9.500" fill="none" stroke="#8b8d9c" stroke-width="1.300"/><rect x="0.800" y="3.300" width="8.400" height="6.700" fill="#eef0f4" stroke="#8b8d9c" stroke-width="1.300"/><path d="M0.800 4h8.400" stroke="#8b8d9c" stroke-width="1.600"/></svg>
<svg style="position:absolute;left:1441px;top:128px;" width="10.5" height="10.5" viewBox="0 0 10.5 10.5"><path d="M0.500 0.500l9.500 9.500M10 0.500L0.500 10" stroke="#8b8d9c" stroke-width="1.200"/></svg>
<!-- g_dialog -->
<div style="position:absolute;left:925.3px;top:218.4px;width:199.7px;height:127.3px;background:#fbfbfb;border:1.300px solid #2d8ad6;box-sizing:border-box;box-shadow:2px 3px 9px 3px rgba(20,20,30,.30);"></div>
<span class="t" style="left:934.0px;top:226.8px;letter-spacing:0.443px;color:#111;">Modify</span>
<div style="position:absolute;left:926.5px;top:249.2px;width:197px;height:1px;background:#b8b8b8;"></div>
<svg style="position:absolute;left:931px;top:257px;" width="16" height="14" viewBox="0 0 16 14"><path d="M1.200 8l4.300 4.500L14.800 1.500" fill="none" stroke="#3a9a14" stroke-width="2.300"/></svg>
<svg style="position:absolute;left:960px;top:258px;" width="13" height="13" viewBox="0 0 13 13"><path d="M1.500 1.500l10 10.500M11.500 1.500l-10 10.500" stroke="#d6281c" stroke-width="2"/></svg>
<svg style="position:absolute;left:987.5px;top:255px;" width="11" height="18" viewBox="0 0 11 18"><rect x="0.500" y="0.500" width="10" height="17" rx="5" fill="#2c2c2c"/><circle cx="5.500" cy="5.300" r="2.600" fill="#e02a20"/><circle cx="5.500" cy="12.500" r="2.600" fill="#2aa82a"/></svg>
<svg style="position:absolute;left:1011px;top:254px;" width="18" height="19" viewBox="0 0 18 19"><path d="M1.500 11L10 3" stroke="#111" stroke-width="1.900"/><path d="M5 1.500h7.200v7.200z" fill="#111"/><path d="M16 9L8 16.500" stroke="#d0d0d0" stroke-width="1.900"/><path d="M13 18.500H6v-7z" fill="#d0d0d0"/></svg>
<svg style="position:absolute;left:1038px;top:255px;" width="19" height="18" viewBox="0 0 19 18"><path d="M4 0.500v6M1 3.500h6M1 9.500h6" stroke="#111" stroke-width="1.500"/><path d="M9 8v6.500" stroke="#2878b8" stroke-width="1.700"/><path d="M12 10.500a3.600 3.600 0 1 1-1 5" fill="none" stroke="#2878b8" stroke-width="1.600"/><path d="M10 8.500l4 .500-2.500 3.300z" fill="#2878b8"/></svg>
<div style="position:absolute;left:1061px;top:251.2px;width:27px;height:25.5px;background:#b2b2b2;border:1px solid #7c7c7c;box-sizing:border-box;"></div>
<svg style="position:absolute;left:1064px;top:254px;" width="21" height="20" viewBox="0 0 21 20"><path d="M4.500 13l6-4.500" stroke="#111" stroke-width="1.500"/><path d="M3 14l4-.700-2.300-3zM11.500 7.500l-4 .700 2.300 3z" fill="#111"/><path d="M2 12.500l5.500 6.500M9.500 6.500l5 6" stroke="#2878b8" stroke-width="1.800"/><path d="M11 4l7.500 7" stroke="#111" stroke-width="2.300"/><path d="M6.500 3.500l1.500 1M9 1l.500 1.500M13 1.500v1.500M16.500 3l-1 1.500M18 6.500h-1.500" stroke="#e89820" stroke-width="1.100"/></svg>
<div style="position:absolute;left:926.5px;top:282.5px;width:196.7px;height:17.8px;background:#fbfbfb;border:1px solid #8a8a8a;box-sizing:border-box;"></div>
<span class="t" style="left:931.9px;top:285.0px;letter-spacing:-0.596px;color:#111;">D1@Sketch13</span>
<div style="position:absolute;left:926.5px;top:304.6px;width:197px;height:20.5px;background:#fbfbfb;border-top:1px solid #8a8a8a;border-left:1px solid #8a8a8a;box-sizing:border-box;"></div>
<span class="t" style="left:927.7px;top:306.6px;letter-spacing:-0.573px;color:#111;">35</span>
<div style="position:absolute;left:940.4px;top:307.5px;width:1px;height:12.5px;background:#000;"></div>
<div style="position:absolute;left:1106.2px;top:306.2px;width:15.5px;height:8.2px;background:#e6e7ec;border:1px solid #adadad;box-sizing:border-box;"></div>
<div style="position:absolute;left:1106.2px;top:315.2px;width:15.5px;height:7.7px;background:#e6e7ec;border:1px solid #adadad;box-sizing:border-box;"></div>
<svg style="position:absolute;left:1110.5px;top:308.5px;" width="7" height="13" viewBox="0 0 7 13"><path d="M0.500 3.400L3.100 0.500 5.700 3.400zM0.500 8.600L3.100 11.500 5.700 8.600z" fill="#111"/></svg>
<div style="position:absolute;left:926.5px;top:325.6px;width:197px;height:6.8px;background:repeating-linear-gradient(90deg,#ffffff 0,#ffffff 4.600px,#b0b0b0 4.600px,#b0b0b0 6px);"></div>
<div style="position:absolute;left:926.5px;top:325.6px;width:197px;height:6.8px;background:linear-gradient(90deg,rgba(70,70,70,.7) 0%,rgba(90,90,90,.3) 8%,rgba(255,255,255,0) 16%,rgba(255,255,255,0) 70%,rgba(90,90,90,.35) 86%,rgba(60,60,60,.7) 100%);"></div>
<div style="position:absolute;left:926.5px;top:332.3px;width:197px;height:1.5px;background:#4a4a4a;"></div>
<!-- g_left -->
<div style="position:absolute;left:0px;top:117.5px;width:598px;height:22.5px;background:#f8f8f8;"></div>
<div style="position:absolute;left:0px;top:117px;width:60px;height:22.5px;background:#d6d6d6;border:1px solid #8e8e8e;box-sizing:border-box;"></div>
<span class="t" style="left:7.0px;top:121.8px;letter-spacing:-0.294px;color:#111;">Features</span>
<div style="position:absolute;left:60.5px;top:117px;width:54.5px;height:23px;background:#f8f8f8;"></div>
<span class="t" style="left:67.5px;top:121.8px;letter-spacing:-0.058px;color:#111;font-weight:bold;">Sketch</span>
<div style="position:absolute;left:115px;top:117px;width:60.5px;height:22.5px;background:#d6d6d6;border:1px solid #8e8e8e;box-sizing:border-box;"></div>
<span class="t" style="left:123.5px;top:121.8px;letter-spacing:-0.294px;color:#111;">Surfaces</span>
<div style="position:absolute;left:175px;top:117px;width:80px;height:22.5px;background:#d6d6d6;border:1px solid #8e8e8e;box-sizing:border-box;"></div>
<span class="t" style="left:183.5px;top:121.8px;letter-spacing:-0.094px;color:#111;">Sheet Metal</span>
<div style="position:absolute;left:254.5px;top:117px;width:75.5px;height:22.5px;background:#d6d6d6;border:1px solid #8e8e8e;box-sizing:border-box;"></div>
<span class="t" style="left:261.5px;top:121.8px;letter-spacing:0.134px;color:#111;">Weldments</span>
<div style="position:absolute;left:329.5px;top:117px;width:75.5px;height:22.5px;background:#d6d6d6;border:1px solid #8e8e8e;box-sizing:border-box;"></div>
<span class="t" style="left:337.5px;top:121.8px;letter-spacing:0.286px;color:#111;">Mold Tools</span>
<div style="position:absolute;left:404.5px;top:117px;width:60.5px;height:22.5px;background:#d6d6d6;border:1px solid #8e8e8e;box-sizing:border-box;"></div>
<span class="t" style="left:412.5px;top:121.8px;letter-spacing:-0.212px;color:#111;">Evaluate</span>
<div style="position:absolute;left:464.5px;top:117px;width:133.5px;height:22.5px;background:#d6d6d6;border:1px solid #8e8e8e;box-sizing:border-box;"></div>
<span class="t" style="left:472.5px;top:121.8px;letter-spacing:-0.410px;color:#111;">SOLIDWORKS Add-Ins</span>
<div style="position:absolute;left:0px;top:140px;width:229px;height:835px;background:#f8f8f8;"></div>
<div style="position:absolute;left:229px;top:139.5px;width:1.3px;height:836px;background:#858585;"></div>
<div style="position:absolute;left:0px;top:139.2px;width:229px;height:1px;background:#a0a0a0;"></div>
<div style="position:absolute;left:0px;top:140px;width:226.5px;height:4px;border:1px solid #c5d3dc;border-left:none;box-sizing:border-box;background:#fcfcfc;"></div>
<svg style="position:absolute;left:109.5px;top:149.5px;" width="6" height="6" viewBox="0 0 6 6"><circle cx="3" cy="3" r="2.300" fill="#dcdcdc" stroke="#9a9a9a" stroke-width=".800"/></svg>
<div style="position:absolute;left:0px;top:159px;width:227px;height:1px;background:#d8d8d8;"></div>
<div style="position:absolute;left:0px;top:188.7px;width:227px;height:1px;background:#a4a4a4;"></div>
<div style="position:absolute;left:2px;top:164px;width:40px;height:25px;background:#d4d4d4;border:1px solid #9c9c9c;box-sizing:border-box;border-left:none;"></div>
<div style="position:absolute;left:41.5px;top:164px;width:40px;height:26px;background:#f8f8f8;"></div>
<div style="position:absolute;left:81.5px;top:164px;width:40.5px;height:25px;background:#d4d4d4;border:1px solid #9c9c9c;box-sizing:border-box;"></div>
<div style="position:absolute;left:121.5px;top:164px;width:40.5px;height:25px;background:#d4d4d4;border:1px solid #9c9c9c;box-sizing:border-box;"></div>
<div style="position:absolute;left:161.5px;top:164px;width:40.5px;height:25px;background:#d4d4d4;border:1px solid #9c9c9c;box-sizing:border-box;"></div>
<svg style="position:absolute;left:12.5px;top:167px;" width="19.5" height="19.5" viewBox="0 0 18.500 18.500"><path d="M1 7.500L6 3.500l3.500 1.500v3.500L17.300 11v4L10.500 18 1 13z" fill="#f4c41c" stroke="#8a6400" stroke-width=".900" stroke-linejoin="round"/><path d="M1 7.500l9.500 5v5.500M10.500 12.500L17.300 11" fill="none" stroke="#8a6400" stroke-width=".800"/><path d="M1.500 8.200l9 4.800v4.500l-9-4.800z" fill="#e0a810"/><path d="M7.500 4.200L12 1.500l5 2v6.300L12.500 12.500 7.500 10z" fill="#6cbce6" stroke="#1d5f8a" stroke-width=".900" stroke-linejoin="round"/><path d="M7.500 4.200l5 2.300 4.500-3M12.500 6.500v6" fill="none" stroke="#1d5f8a" stroke-width=".800"/><path d="M8 4.800l4.500 2.100v5l-4.500-2.200z" fill="#3f9bd0"/></svg>
<svg style="position:absolute;left:52.5px;top:167.5px;" width="19" height="19" viewBox="0 0 19 19"><rect x="1" y="1" width="17" height="17" rx="1.500" fill="#fff" stroke="#222" stroke-width="1.300"/><path d="M1.500 1.500h16v3.500h-16z" fill="#6ab0dc"/><path d="M3.500 7.500h3v2h-3zM3.500 11h3v2h-3zM3.500 14.500h3v2h-3z" fill="#2c7fb8" stroke="#154a70" stroke-width=".600"/><path d="M8.500 8.500h7M8.500 12h7M8.500 15.500h7" stroke="#333" stroke-width="1.100"/></svg>
<svg style="position:absolute;left:93px;top:167.5px;" width="18" height="19" viewBox="0 0 18 19"><path d="M3 1v17M1 1h5M1 18h4M3 4.500h5M3 12.500h6" stroke="#333" stroke-width="1.400" fill="none"/><rect x="6.500" y="2" width="5.500" height="5" fill="#fff" stroke="#333" stroke-width="1.200"/><rect x="9" y="10" width="5.500" height="5" fill="#fff" stroke="#333" stroke-width="1.200"/></svg>
<svg style="position:absolute;left:132px;top:167.5px;" width="19" height="19" viewBox="0 0 19 19"><circle cx="9.500" cy="9.500" r="6" fill="none" stroke="#111" stroke-width="1.800"/><path d="M9.500 0.500v18M0.500 9.500h18" stroke="#111" stroke-width="1.800"/></svg>
<svg style="position:absolute;left:172.5px;top:167px;" width="19" height="19" viewBox="0 0 19 19"><circle cx="9.500" cy="9.500" r="9" fill="#f2c320"/><path d="M9.500 9.500L1 7A9 9 0 0 1 9.500 0.500z" fill="#3a78d0"/><path d="M9.500 9.500V0.500a9 9 0 0 1 9 9z" fill="#d83020"/><path d="M9.500 9.500L1 7a9 9 0 0 0 3 9.500z" fill="#38a838"/><ellipse cx="13.500" cy="6" rx="2.600" ry="4" transform="rotate(-20 13.500 6)" fill="#111"/></svg>
<svg style="position:absolute;left:9.5px;top:196.5px;" width="19" height="19" viewBox="0 0 19 19"><path d="M3.500 9.500l8.500-6" stroke="#111" stroke-width="1.700"/><path d="M2 10.500l4.500-1-2.500-3.500zM13.500 2.500l-4.500 1 2.500 3.500z" fill="#111"/><path d="M1 10l6.500 8M11.500 1.500l6.500 8" stroke="#2c7fb8" stroke-width="1.800"/></svg>
<span class="t" style="left:34.0px;top:199.8px;letter-spacing:-0.204px;color:#111;font-weight:bold;">Dimension</span>
<svg style="position:absolute;left:201px;top:199px;" width="14" height="14" viewBox="0 0 14 14"><circle cx="7" cy="7" r="6.200" fill="#f4f8fc" stroke="#222" stroke-width="1.100"/><text x="7" y="10.600" font-size="10" font-weight="bold" font-family="Liberation Sans,sans-serif" text-anchor="middle" fill="#2c6fb0">?</text></svg>
<svg style="position:absolute;left:8px;top:227px;" width="15" height="12" viewBox="0 0 15 12"><path d="M1 7l4 4L14 1.500" fill="none" stroke="#b8b8b8" stroke-width="2.200"/></svg>
<div style="position:absolute;left:2px;top:279.6px;width:225px;height:1px;background:#a4a4a4;"></div>
<div style="position:absolute;left:2px;top:256px;width:40.5px;height:25px;background:#f8f8f8;"></div>
<div style="position:absolute;left:42px;top:256px;width:53px;height:24.5px;background:#d4d4d4;border:1px solid #9c9c9c;box-sizing:border-box;"></div>
<div style="position:absolute;left:94px;top:256px;width:43px;height:24.5px;background:#d4d4d4;border:1px solid #9c9c9c;box-sizing:border-box;"></div>
<div style="position:absolute;left:2px;top:256px;width:40px;height:1px;background:#c8c8c8;"></div>
<span class="t" style="left:8.0px;top:262.1px;letter-spacing:-0.260px;color:#333;">Value</span>
<span class="t" style="left:49.0px;top:262.1px;letter-spacing:-0.409px;color:#333;">Leaders</span>
<span class="t" style="left:101.0px;top:262.1px;letter-spacing:0.098px;color:#333;">Other</span>
<div style="position:absolute;left:5px;top:297px;width:217px;height:1px;background:#a9a9a9;"></div>
<span class="t" style="left:8.5px;top:304.8px;letter-spacing:-0.536px;color:#333;font-weight:bold;">Style</span>
<svg style="position:absolute;left:209px;top:307.5px;" width="10" height="7" viewBox="0 0 10 7"><path d="M0.800 6L5 1.500 9.200 6" fill="none" stroke="#444" stroke-width="1.900"/></svg>
<svg style="position:absolute;left:41px;top:328px;" width="19" height="19" viewBox="0 0 19 19"><path d="M0.800 9h5l2.500 2.500V18h-7.500z" fill="#f2f2f2" stroke="#c4c4c4"/><path d="M2 8c0-4 2-5.500 5-5.500V0.500l3.500 3.500L7 7.500V5.500C5 5.500 4 6.500 4 8z" fill="#c4c4c4"/><path d="M9 11l9-8M9 11l1-3.500M9 11l3.500-.500M18 3l-1 3.500M18 3l-3.500.500" stroke="#c4c4c4" stroke-width="1.300" fill="none"/></svg>
<svg style="position:absolute;left:66px;top:328px;" width="19" height="19" viewBox="0 0 19 19"><path d="M8 0.500l2.300 5 5.200.600-3.900 3.600 1.100 5.300L8 12.300 3.300 15l1.100-5.300L0.500 6.100l5.200-.600z" fill="#c4c4c4" transform="scale(.95)"/><path d="M13.500 9.500v8M9.500 13.500h8" stroke="#b0b0b0" stroke-width="2.400"/></svg>
<svg style="position:absolute;left:90px;top:328px;" width="19" height="19" viewBox="0 0 19 19"><path d="M8 0.500l2.300 5 5.200.600-3.900 3.600 1.100 5.300L8 12.300 3.300 15l1.100-5.300L0.500 6.100l5.200-.600z" fill="#c4c4c4" transform="scale(.95)"/><path d="M12 12l5.500 5.500M17.500 12L12 17.500" stroke="#b0b0b0" stroke-width="1.800"/></svg>
<svg style="position:absolute;left:114px;top:328px;" width="19" height="19" viewBox="0 0 19 19"><path d="M8 0.500l2.300 5 5.200.600-3.900 3.600 1.100 5.300L8 12.300 3.300 15l1.100-5.300L0.500 6.100l5.200-.600z" fill="#c4c4c4" transform="scale(.95)"/><rect x="8" y="8" width="10" height="10" fill="#e8e8e8" stroke="#b0b0b0" stroke-width="1.200"/><path d="M10 8.500h6v3.500h-6zM10.500 14.500h5v3.500h-5z" fill="#f6f6f6" stroke="#b0b0b0" stroke-width=".800"/></svg>
<svg style="position:absolute;left:138px;top:328px;" width="19" height="19" viewBox="0 0 19 19"><path d="M8 0.500l2.300 5 5.200.600-3.900 3.600 1.100 5.300L8 12.300 3.300 15l1.100-5.300L0.500 6.100l5.200-.600z" fill="#c4c4c4" transform="scale(.95)"/><path d="M12 8h4v5h2.500L14 18l-4.500-5H12z" fill="#b0b0b0"/></svg>
<div style="position:absolute;left:44px;top:354.2px;width:173px;height:20.5px;background:#cbcbcb;border:1px solid #b4b4b4;box-sizing:border-box;"></div><span class="t" style="left:48.5px;top:357.6px;letter-spacing:-0.615px;color:#757575;">&lt;NONE&gt;</span><svg style="position:absolute;left:203.75px;top:362.025px;" width="8.5" height="5.95" viewBox="0 0 10 7"><path d="M0.800 1L5 5.500 9.200 1" fill="none" stroke="#b0b0b0" stroke-width="1.2"/></svg>
<div style="position:absolute;left:5px;top:385.2px;width:217px;height:1px;background:#a9a9a9;"></div>
<span class="t" style="left:8.5px;top:392.8px;letter-spacing:-0.613px;color:#333;font-weight:bold;">Tolerance/Precision</span>
<svg style="position:absolute;left:209px;top:395.5px;" width="10" height="7" viewBox="0 0 10 7"><path d="M0.800 6L5 1.500 9.200 6" fill="none" stroke="#444" stroke-width="1.900"/></svg>
<div style="position:absolute;left:44px;top:415.3px;width:173px;height:20.5px;background:#cbcbcb;border:1px solid #b4b4b4;box-sizing:border-box;"></div><span class="t" style="left:48.5px;top:418.7px;letter-spacing:-0.171px;color:#757575;">None</span><svg style="position:absolute;left:203.75px;top:423.125px;" width="8.5" height="5.95" viewBox="0 0 10 7"><path d="M0.800 1L5 5.500 9.200 1" fill="none" stroke="#b0b0b0" stroke-width="1.2"/></svg>
<div style="position:absolute;left:44px;top:447.2px;width:173px;height:20.5px;background:#cbcbcb;border:1px solid #b4b4b4;box-sizing:border-box;"></div><span class="t" style="left:48.5px;top:450.6px;letter-spacing:-0.407px;color:#757575;">.12 (Document)</span><svg style="position:absolute;left:203.75px;top:455.025px;" width="8.5" height="5.95" viewBox="0 0 10 7"><path d="M0.800 1L5 5.500 9.200 1" fill="none" stroke="#b0b0b0" stroke-width="1.2"/></svg>
<svg style="position:absolute;left:10px;top:414px;" width="22" height="22" viewBox="0 0 22 22"><text x="6.500" y="7" font-size="6.500" font-family="Liberation Sans,sans-serif" font-weight="bold" lengthAdjust="spacingAndGlyphs" fill="#2070a8" textLength="13">+.01</text><text x="1" y="14" font-size="7.500" font-family="Liberation Sans,sans-serif" font-weight="bold" lengthAdjust="spacingAndGlyphs" fill="#111" textLength="13.500">1.50</text><text x="6.500" y="21" font-size="6.500" font-family="Liberation Sans,sans-serif" font-weight="bold" lengthAdjust="spacingAndGlyphs" fill="#2070a8" textLength="13">-.01</text></svg>
<svg style="position:absolute;left:10px;top:446px;" width="22" height="22" viewBox="0 0 22 22"><text x="9.500" y="7" font-size="6.500" font-family="Liberation Sans,sans-serif" font-weight="bold" lengthAdjust="spacingAndGlyphs" fill="#111" textLength="10">.01</text><text x="1" y="14.500" font-size="7.500" font-family="Liberation Sans,sans-serif" font-weight="bold" lengthAdjust="spacingAndGlyphs" fill="#2070a8" textLength="18">X.XXX</text><text x="9.500" y="22" font-size="6.500" font-family="Liberation Sans,sans-serif" font-weight="bold" lengthAdjust="spacingAndGlyphs" fill="#111" textLength="10">.01</text></svg>
<div style="position:absolute;left:5px;top:478.8px;width:217px;height:1px;background:#a9a9a9;"></div>
<span class="t" style="left:8.5px;top:486.8px;letter-spacing:-0.529px;color:#333;font-weight:bold;">Primary Value</span>
<svg style="position:absolute;left:209px;top:489.5px;" width="10" height="7" viewBox="0 0 10 7"><path d="M0.800 6L5 1.500 9.200 6" fill="none" stroke="#444" stroke-width="1.900"/></svg>
<div style="position:absolute;left:44px;top:507px;width:173px;height:20px;background:#d2d2d2;border:1px solid #bdbdbd;box-shadow:inset 0 0 0 1px #ededed;box-sizing:border-box;"></div>
<span class="t" style="left:50.0px;top:509.8px;letter-spacing:-0.550px;color:#757575;">D1@Sketch13</span>
<div style="position:absolute;left:44px;top:535.4px;width:152px;height:22.3px;background:#d2d2d2;border:1px solid #bdbdbd;box-shadow:inset 0 0 0 1px #ededed;box-sizing:border-box;"></div>
<span class="t" style="left:50.0px;top:537.8px;letter-spacing:-0.717px;color:#757575;">45.00mm</span>
<svg style="position:absolute;left:203px;top:539px;" width="8" height="18" viewBox="0 0 8 18"><path d="M0.700 5.300L4 1.500l3.300 3.800M0.700 12.200L4 16l3.300-3.800" fill="none" stroke="#b6b6b6" stroke-width="1.800"/></svg>
<svg style="position:absolute;left:13px;top:537px;" width="16" height="19" viewBox="0 0 16 19"><path d="M1.500 10L11 1.500" stroke="#a8a8a8" stroke-width="1.700"/><path d="M5 1h7v7z" fill="#a8a8a8"/><path d="M14.500 9L6 17.500" stroke="#dcdcdc" stroke-width="1.700"/><path d="M11 18H4.500v-6.500z" fill="#dcdcdc"/></svg>
<svg style="position:absolute;left:229px;top:527px;" width="10" height="39" viewBox="0 0 10 39"><path d="M0.600 0.500H8.500V38.500H0.600" fill="#f8f8f8" stroke="#858585" stroke-width="1.100"/><path d="M0 1.100V38" stroke="#f8f8f8" stroke-width="1.500"/><circle cx="4.300" cy="19" r="2.200" fill="#dcdcdc" stroke="#8a8a8a" stroke-width=".800"/></svg>
<div style="position:absolute;left:5px;top:568.8px;width:217px;height:1px;background:#a9a9a9;"></div>
<span class="t" style="left:8.5px;top:576.8px;letter-spacing:-0.532px;color:#333;font-weight:bold;">Dimension Text</span>
<svg style="position:absolute;left:209px;top:579.5px;" width="10" height="7" viewBox="0 0 10 7"><path d="M0.800 6L5 1.500 9.200 6" fill="none" stroke="#444" stroke-width="1.900"/></svg>
<div style="position:absolute;left:36px;top:597.3px;width:183.7px;height:51.3px;background:#f9f9f9;border:1px solid #a2a2a2;box-sizing:border-box;"></div>
<span class="t" style="left:38.0px;top:597.0px;letter-spacing:-0.303px;color:#555;">&lt;DIM&gt;</span>
<div style="position:absolute;left:36px;top:656.3px;width:183.7px;height:51.3px;background:#f9f9f9;border:1px solid #a2a2a2;box-sizing:border-box;"></div>
<svg style="position:absolute;left:11px;top:603px;" width="21" height="12" viewBox="0 0 21 12"><path d="M3 0.500C0.500 3.500 0.500 8.500 3 11.500M18 0.500C20.500 3.500 20.500 8.500 18 11.500" fill="none" stroke="#a6a6a6" stroke-width="1.200"/><path d="M4.500 3l5 6M9.500 3l-5 6M11.500 3l5 6M16.500 3l-5 6" stroke="#a6a6a6" stroke-width="1.100"/></svg>
<svg style="position:absolute;left:11px;top:631px;" width="21" height="12" viewBox="0 0 21 12"><rect x="0.700" y="0.700" width="19.600" height="10.600" rx="5.300" fill="none" stroke="#a6a6a6" stroke-width="1.300"/><path d="M4.500 3l5 6M9.500 3l-5 6M11.500 3l5 6M16.500 3l-5 6" stroke="#a6a6a6" stroke-width="1.100"/></svg>
<svg style="position:absolute;left:11px;top:662px;" width="21" height="12" viewBox="0 0 21 12"><path d="M3 0.500C0.500 3.500 0.500 8.500 3 11.500M18 0.500C20.500 3.500 20.500 8.500 18 11.500" fill="none" stroke="#a6a6a6" stroke-width="1.200"/><path d="M4.500 3l5 6M9.500 3l-5 6M11.500 3l5 6M16.500 3l-5 6" stroke="#a6a6a6" stroke-width="1.100"/></svg>
<svg style="position:absolute;left:11px;top:683.5px;" width="21" height="12" viewBox="0 0 21 12"><rect x="0.700" y="0.700" width="19.600" height="10.600" rx="5.300" fill="none" stroke="#a6a6a6" stroke-width="1.300"/><path d="M4.500 3l5 6M9.500 3l-5 6M11.500 3l5 6M16.500 3l-5 6" stroke="#a6a6a6" stroke-width="1.100"/></svg>
<svg style="position:absolute;left:12.5px;top:723px;" width="18" height="10" viewBox="0 0 18 10"><path d="M0.500 5h5M12.500 5h5M3 2.500L0.500 5 3 7.500M15 2.500l2.500 2.500L15 7.500" fill="none" stroke="#a6a6a6" stroke-width="1.300"/><path d="M7 2.500l4 5M11 2.500l-4 5" stroke="#a6a6a6" stroke-width="1"/></svg>
<svg style="position:absolute;left:38px;top:721px;" width="19" height="15" viewBox="0 0 19 15"><path d="M1 11.500h17M3.500 9L1 11.500 3.500 14M15.500 9l2.500 2.500-2.500 2.500" fill="none" stroke="#a6a6a6" stroke-width="1.300"/><path d="M3 10.500L12 3.500" stroke="#a6a6a6" stroke-width="1.200"/><path d="M12.500 0.500l4 5M16.500 0.500l-4 5" stroke="#a6a6a6" stroke-width="1"/></svg>
<svg style="position:absolute;left:12px;top:746.5px;" width="18" height="18" viewBox="0 0 18 18"><path d="M0 1h18" stroke="#9e9e9e" stroke-width="1.200"/><path d="M0 4.3h12" stroke="#9e9e9e" stroke-width="1.200"/><path d="M0 7.6h18" stroke="#9e9e9e" stroke-width="1.200"/><path d="M0 10.9h12" stroke="#9e9e9e" stroke-width="1.200"/><path d="M0 14.2h18" stroke="#9e9e9e" stroke-width="1.200"/><path d="M0 17.5h12" stroke="#9e9e9e" stroke-width="1.200"/></svg>
<div style="position:absolute;left:35px;top:743px;width:24px;height:23.5px;background:#aeaeae;border:1px solid #4a4a4a;box-sizing:border-box;"></div>
<svg style="position:absolute;left:38px;top:746.5px;" width="18" height="18" viewBox="0 0 18 18"><path d="M0 1h18" stroke="#444" stroke-width="1.200"/><path d="M3 4.3h12" stroke="#444" stroke-width="1.200"/><path d="M0 7.6h18" stroke="#444" stroke-width="1.200"/><path d="M3 10.9h12" stroke="#444" stroke-width="1.200"/><path d="M0 14.2h18" stroke="#444" stroke-width="1.200"/><path d="M3 17.5h12" stroke="#444" stroke-width="1.200"/></svg>
<svg style="position:absolute;left:63px;top:746.5px;" width="18" height="18" viewBox="0 0 18 18"><path d="M0 1h18" stroke="#9e9e9e" stroke-width="1.200"/><path d="M6 4.3h12" stroke="#9e9e9e" stroke-width="1.200"/><path d="M0 7.6h18" stroke="#9e9e9e" stroke-width="1.200"/><path d="M6 10.9h12" stroke="#9e9e9e" stroke-width="1.200"/><path d="M0 14.2h18" stroke="#9e9e9e" stroke-width="1.200"/><path d="M6 17.5h12" stroke="#9e9e9e" stroke-width="1.200"/></svg>
<svg style="position:absolute;left:14px;top:772px;" width="14" height="18" viewBox="0 0 14 18"><circle cx="7" cy="9.500" r="4.800" fill="none" stroke="#8a8a8a" stroke-width="1.500"/><path d="M2 17L12 1.500" stroke="#8a8a8a" stroke-width="1.500"/></svg>
<svg style="position:absolute;left:48px;top:773.5px;" width="7" height="7" viewBox="0 0 7 7"><circle cx="3.500" cy="3.500" r="2.500" fill="none" stroke="#8a8a8a" stroke-width="1.400"/></svg>
<svg style="position:absolute;left:67px;top:774px;" width="10" height="15" viewBox="0 0 10 15"><path d="M5 0.500v9M0.500 5h9M0.500 13.500h9" stroke="#8a8a8a" stroke-width="1.500"/></svg>
<svg style="position:absolute;left:91px;top:773px;" width="14" height="17" viewBox="0 0 14 17"><path d="M8 2.500a3.800 3.800 0 1 0 0 6.500" fill="none" stroke="#8a8a8a" stroke-width="1.400"/><path d="M6 0.500V15.500h7.500" fill="none" stroke="#8a8a8a" stroke-width="1.400"/></svg>
<svg style="position:absolute;left:16px;top:802px;" width="10" height="11" viewBox="0 0 10 11"><rect x="0.900" y="0.900" width="8.200" height="8.700" fill="none" stroke="#8a8a8a" stroke-width="1.600"/></svg>
<svg style="position:absolute;left:41px;top:803px;" width="12" height="8" viewBox="0 0 12 8"><path d="M0.800 1L6 6.500 11.200 1" fill="none" stroke="#8a8a8a" stroke-width="1.500"/></svg>
<svg style="position:absolute;left:65px;top:803px;" width="14" height="9" viewBox="0 0 14 9"><path d="M0.800 0.500V8h12.400V0.500" fill="none" stroke="#8a8a8a" stroke-width="1.500"/></svg>
<svg style="position:absolute;left:91px;top:799px;" width="14" height="16" viewBox="0 0 14 16"><path d="M0.500 1.500h13M7 1.500V14M2 9l5 5.500L12 9" fill="none" stroke="#8a8a8a" stroke-width="1.500"/></svg>
<svg style="position:absolute;left:114px;top:798px;" width="19" height="18" viewBox="0 0 19 18"><path d="M7 2.500a3.800 3.800 0 1 0 0 6.500" fill="none" stroke="#8a8a8a" stroke-width="1.400"/><path d="M5 0.500V15.500h6" fill="none" stroke="#8a8a8a" stroke-width="1.400"/><path d="M13.500 0.500v7M10 4h7" stroke="#8a8a8a" stroke-width="2"/><path d="M12 16h6" stroke="#8a8a8a" stroke-dasharray="1 1"/></svg>
<div style="position:absolute;left:5px;top:829px;width:217px;height:1px;background:#a9a9a9;"></div>
<div style="position:absolute;left:9px;top:837.3px;width:12px;height:11.5px;background:#fbfbfb;border:1px solid #c8c8c8;box-sizing:border-box;"></div>
<span class="t" style="left:31.8px;top:836.8px;letter-spacing:-0.548px;color:#333;font-weight:bold;">Dual Dimension</span>
<svg style="position:absolute;left:209px;top:840px;" width="10" height="7" viewBox="0 0 10 7"><path d="M0.800 1L5 5.500 9.200 1" fill="none" stroke="#444" stroke-width="1.9"/></svg>
<!-- g_right -->
<div style="position:absolute;left:1469px;top:118px;width:210px;height:873.5px;background:#f8f8f8;"></div>
<div style="position:absolute;left:1467.8px;top:140px;width:1.4px;height:851px;background:#8a8a8a;"></div>
<div style="position:absolute;left:1465.3px;top:130px;width:1px;height:26px;background:#9a9aa0;"></div>
<div style="position:absolute;left:1469px;top:118px;width:210px;height:20.3px;background:#a9aaad;"></div>
<div style="position:absolute;left:1469px;top:138px;width:210px;height:1.3px;background:#1e1e1e;"></div>
<svg style="position:absolute;left:1477.5px;top:123px;" width="13" height="10" viewBox="0 0 13 10"><path d="M5.500 1L1.500 4.700l4 3.700M11.500 1L7.500 4.700l4 3.700" fill="none" stroke="#fff" stroke-width="3.600" opacity=".650"/><path d="M5.500 1L1.500 4.700l4 3.700M11.500 1L7.500 4.700l4 3.700" fill="none" stroke="#111" stroke-width="2.100"/></svg>
<span class="t" style="left:1536.0px;top:121.1px;letter-spacing:-0.337px;font-weight:bold;">Design Library</span>
<svg style="position:absolute;left:1661px;top:120.5px;" width="15" height="15" viewBox="0 0 15 15"><g transform="rotate(40 7.500 7.500)"><path d="M4.500 0.500h6v1.500l-1 1v4l2.500 2.500v1H3V9.500L5.500 7V3l-1-1z" fill="#111" stroke="#fff" stroke-width=".800"/><path d="M7.500 10.500V15" stroke="#111" stroke-width="1.500"/></g></svg>
<svg style="position:absolute;left:1478.5px;top:147px;" width="17" height="17" viewBox="0 0 17 17"><circle cx="8.500" cy="8.500" r="7.600" fill="#fafafa" stroke="#dcdcdc" stroke-width="1"/><g transform="translate(8.500 8.500)"><path d="M-4 0h8M-4 0l3.500-3.500M-4 0l3.500 3.500" fill="none" stroke="#d0d0d0" stroke-width="2.600"/></g></svg>
<svg style="position:absolute;left:1505.5px;top:147px;" width="17" height="17" viewBox="0 0 17 17"><circle cx="8.500" cy="8.500" r="7.600" fill="#fafafa" stroke="#dcdcdc" stroke-width="1"/><g transform="translate(8.500 8.500)"><path d="M4 0h-8M4 0l-3.500-3.500M4 0l-3.500 3.500" fill="none" stroke="#d0d0d0" stroke-width="2.600"/></g></svg>
<svg style="position:absolute;left:1533.6px;top:154px" width="5.8" height="3.2"><path d="M0 0H5.8L2.9 3.2Z" fill="#8a8a8a"/></svg>
<svg style="position:absolute;left:1548px;top:147px;" width="15" height="18" viewBox="0 0 15 18"><g stroke="#333" stroke-width=".900" stroke-linejoin="round"><path d="M1 3.500l3-2.500 3 1v12.500l-3 2.500-3-1z" fill="#f4f4f4"/><path d="M1 3.500l3 1v12.500M4 4.500l3-2.500" fill="none"/><path d="M4.5 3.500l3-2.500 3 1v12.500l-3 2.500-3-1z" fill="#f4f4f4"/><path d="M4.5 3.500l3 1v12.500M7.5 4.500l3-2.500" fill="none"/><path d="M8 3.500l3-2.500 3 1v12.500l-3 2.500-3-1z" fill="#f4f4f4"/><path d="M8 3.500l3 1v12.500M11 4.500l3-2.500" fill="none"/></g></svg>
<svg style="position:absolute;left:1557px;top:155.5px;" width="9" height="9" viewBox="0 0 9 9"><path d="M4.500 0v9M0 4.500h9" stroke="#2a9a1a" stroke-width="2.800"/></svg>
<svg style="position:absolute;left:1579px;top:148px;" width="15" height="18" viewBox="0 0 15 18"><g stroke="#333" stroke-width=".900" stroke-linejoin="round"><path d="M1 3.500l3-2.500 3 1v12.500l-3 2.500-3-1z" fill="#f4f4f4"/><path d="M1 3.500l3 1v12.500M4 4.500l3-2.500" fill="none"/><path d="M4.5 3.500l3-2.500 3 1v12.500l-3 2.500-3-1z" fill="#f4f4f4"/><path d="M4.5 3.500l3 1v12.500M7.5 4.500l3-2.500" fill="none"/><path d="M8 3.500l3-2.500 3 1v12.500l-3 2.500-3-1z" fill="#f4f4f4"/><path d="M8 3.500l3 1v12.500M11 4.500l3-2.500" fill="none"/></g></svg>
<svg style="position:absolute;left:1575px;top:146.5px;" width="8" height="8" viewBox="0 0 8 8"><g stroke="#e08a10" stroke-width="1.100"><path d="M4 0v8M0 4h8M1.200 1.200l5.600 5.600M6.800 1.200L1.200 6.800"/></g></svg>
<svg style="position:absolute;left:1603px;top:150px;" width="18" height="15" viewBox="0 0 18 15"><path d="M0.800 14V2h5.500l1.500 2h6.500v3" fill="#f0f0f0" stroke="#444" stroke-width="1"/><path d="M0.800 14l3.500-7.500H17L13.500 14z" fill="#ececec" stroke="#444" stroke-width="1"/></svg>
<svg style="position:absolute;left:1601.5px;top:146px;" width="8" height="8" viewBox="0 0 8 8"><g stroke="#e08a10" stroke-width="1.100"><path d="M4 0v8M0 4h8M1.200 1.200l5.600 5.600M6.800 1.200L1.200 6.800"/></g></svg>
<svg style="position:absolute;left:1630px;top:147px;" width="17" height="17" viewBox="0 0 17 17"><path d="M2 7.500A6.500 6.500 0 0 1 13 3.500L15.500 1v7H8.500l2.500-2.500A4 4 0 0 0 5 7.500zM15 9.500A6.500 6.500 0 0 1 4 13.500L1.500 16V9h7L6 11.500A4 4 0 0 0 12 9.500z" fill="#3a8cc4" stroke="#1a5a88" stroke-width=".700"/></svg>
<svg style="position:absolute;left:1659.5px;top:149px;" width="10.5" height="14" viewBox="0 0 10.5 14"><path d="M5.200 0.500L0.500 6h3v7.500h3.500V6h3z" fill="#e6e6e6" stroke="#d4d4d4"/></svg>
<div style="position:absolute;left:1472px;top:173.2px;width:207px;height:1px;background:#b4b4b4;"></div>
<div style="position:absolute;left:1442.4px;top:168.2px;width:26.4px;height:24px;background:#dadada;border:1px solid #8e8e8e;box-sizing:border-box;"></div>
<div style="position:absolute;left:1442.4px;top:191.2px;width:27.5px;height:25.1px;background:#f8f8f8;border:1px solid #8e8e8e;border-right:none;box-sizing:border-box;"></div>
<div style="position:absolute;left:1442.4px;top:215.3px;width:26.4px;height:24.9px;background:#dadada;border:1px solid #8e8e8e;box-sizing:border-box;"></div>
<div style="position:absolute;left:1442.4px;top:239.2px;width:26.4px;height:25.2px;background:#dadada;border:1px solid #8e8e8e;box-sizing:border-box;"></div>
<div style="position:absolute;left:1442.4px;top:263.4px;width:26.4px;height:24.9px;background:#dadada;border:1px solid #8e8e8e;box-sizing:border-box;"></div>
<div style="position:absolute;left:1442.4px;top:287.3px;width:26.4px;height:25.2px;background:#dadada;border:1px solid #8e8e8e;box-sizing:border-box;"></div>
<div style="position:absolute;left:1442.4px;top:311.5px;width:26.4px;height:25px;background:#dadada;border:1px solid #8e8e8e;box-sizing:border-box;"></div>
<svg style="position:absolute;left:1446px;top:170px;" width="19" height="19" viewBox="0 0 19 19"><path d="M1.500 10L9.500 2.500l8 7.500" fill="none" stroke="#1a5a8a" stroke-width="2.200"/><path d="M3.500 9.500V17.500h12V9.500" fill="#fff" stroke="#222" stroke-width="1.200"/><path d="M7.500 17.500v-5h4v5" fill="none" stroke="#222" stroke-width="1.100"/></svg>
<svg style="position:absolute;left:1448px;top:194.5px;" width="15" height="18" viewBox="0 0 15 18"><g stroke="#333" stroke-width=".900" stroke-linejoin="round"><path d="M1 3.500l3-2.500 3 1v12.500l-3 2.500-3-1z" fill="#f4f4f4"/><path d="M1 3.500l3 1v12.500M4 4.500l3-2.500" fill="none"/><path d="M4.5 3.500l3-2.500 3 1v12.500l-3 2.500-3-1z" fill="#f4f4f4"/><path d="M4.5 3.500l3 1v12.500M7.5 4.500l3-2.500" fill="none"/><path d="M8 3.500l3-2.500 3 1v12.500l-3 2.500-3-1z" fill="#f4f4f4"/><path d="M8 3.500l3 1v12.500M11 4.500l3-2.500" fill="none"/></g></svg>
<svg style="position:absolute;left:1445px;top:219px;" width="21" height="17" viewBox="0 0 21 17"><path d="M1 15.500V2h6l1.500 2.500H16V7" fill="#e8e8e8" stroke="#444" stroke-width="1.100"/><path d="M1 15.500L5 7h15l-4.500 8.500z" fill="#f4f4f4" stroke="#444" stroke-width="1.100"/></svg>
<svg style="position:absolute;left:1446px;top:243px;" width="19" height="17" viewBox="0 0 19 17"><rect x="0.700" y="0.700" width="17.600" height="15.600" rx="1.500" fill="#f4f4f4" stroke="#333" stroke-width="1.100"/><path d="M3 3.500h8v3H8.500v3.500H12v3H3v-3h2.500V6.500H3z" fill="#f0c818" stroke="#8a6a00" stroke-width=".700"/><path d="M13 3.500h3.500v3H13zM13.500 9h3v5h-3z" fill="#f0c818" stroke="#8a6a00" stroke-width=".600"/></svg>
<svg style="position:absolute;left:1446.5px;top:266.5px;" width="18" height="18" viewBox="0 0 18 18"><circle cx="9" cy="9" r="8.300" fill="#e8c020"/><path d="M9 9L0.800 8A8.300 8.300 0 0 1 9 0.700z" fill="#3070d0"/><path d="M9 9V0.700A8.300 8.300 0 0 1 17.300 9z" fill="#d83020"/><path d="M9 9L0.800 8a8.300 8.300 0 0 0 4 8z" fill="#30a030"/><ellipse cx="6" cy="5" rx="3" ry="2" fill="#fff" opacity=".450"/></svg>
<svg style="position:absolute;left:1446.5px;top:290.5px;" width="18" height="18" viewBox="0 0 18 18"><rect x="0.700" y="0.700" width="16.600" height="16.600" fill="#fff" stroke="#222" stroke-width="1.200"/><path d="M1 1h16v3H1z" fill="#2878b0"/><path d="M3 6.500h3.500v2H3zM3 10h3.500v2H3zM3 13.500h3.500v2H3z" fill="#2c7fb8" stroke="#154a70" stroke-width=".500"/><path d="M8.500 7.500h7M8.500 11h7M8.500 14.500h7" stroke="#333" stroke-width="1.100"/></svg>
<svg style="position:absolute;left:1446px;top:314px;" width="19" height="19" viewBox="0 0 19 19"><circle cx="9.500" cy="9.500" r="8.800" fill="#2a78c8" stroke="#154a80" stroke-width=".800"/><path d="M3 8.500A6.500 6.500 0 0 1 13.500 5L15.500 3v6h-6l2-2A3.800 3.800 0 0 0 6 8.500zM16 10.500A6.500 6.500 0 0 1 5.500 14L3.500 16v-6h6l-2 2a3.800 3.800 0 0 0 5.500-1.500z" fill="#fff"/></svg>
<div style="position:absolute;left:1496px;top:181.3px;width:106px;height:21.3px;background:#dde1ee;"></div>
<svg style="position:absolute;left:1481.5px;top:188.8px;" width="7" height="9" viewBox="0 0 7 9"><path d="M1 0.700L5.500 4.500 1 8.300" fill="none" stroke="#a2a2a2" stroke-width="1.900"/></svg>
<span class="t" style="left:1523.0px;top:184.6px;letter-spacing:-0.097px;color:#111;">Design Library</span>
<svg style="position:absolute;left:1481.5px;top:210.8px;" width="7" height="9" viewBox="0 0 7 9"><path d="M1 0.700L5.500 4.500 1 8.300" fill="none" stroke="#a2a2a2" stroke-width="1.900"/></svg>
<span class="t" style="left:1523.0px;top:206.6px;letter-spacing:0.092px;color:#111;">Toolbox</span>
<svg style="position:absolute;left:1481.5px;top:232.8px;" width="7" height="9" viewBox="0 0 7 9"><path d="M1 0.700L5.500 4.500 1 8.300" fill="none" stroke="#a2a2a2" stroke-width="1.900"/></svg>
<span class="t" style="left:1523.0px;top:228.6px;letter-spacing:-0.022px;color:#111;">3D ContentCentral</span>
<svg style="position:absolute;left:1481.5px;top:254.8px;" width="7" height="9" viewBox="0 0 7 9"><path d="M1 0.700L5.500 4.500 1 8.300" fill="none" stroke="#a2a2a2" stroke-width="1.900"/></svg>
<span class="t" style="left:1523.0px;top:250.6px;letter-spacing:-0.428px;color:#111;">SOLIDWORKS Content</span>
<svg style="position:absolute;left:1501px;top:183.5px;" width="15" height="18" viewBox="0 0 15 18"><g stroke="#333" stroke-width=".900" stroke-linejoin="round"><path d="M1 3.500l3-2.500 3 1v12.500l-3 2.500-3-1z" fill="#f4f4f4"/><path d="M1 3.500l3 1v12.500M4 4.500l3-2.500" fill="none"/><path d="M4.5 3.500l3-2.500 3 1v12.500l-3 2.500-3-1z" fill="#f4f4f4"/><path d="M4.5 3.500l3 1v12.500M7.5 4.500l3-2.500" fill="none"/><path d="M8 3.500l3-2.500 3 1v12.500l-3 2.500-3-1z" fill="#f4f4f4"/><path d="M8 3.500l3 1v12.500M11 4.500l3-2.500" fill="none"/></g></svg>
<svg style="position:absolute;left:1501px;top:205px;" width="15" height="18" viewBox="0 0 15 18"><path d="M1 3.500L3 1h9l2 2.500V7l-2 1.500H3L1 7z" fill="#d8d8d8" stroke="#333" stroke-width="1"/><ellipse cx="7.500" cy="3" rx="5" ry="1.600" fill="#f4f4f4" stroke="#555" stroke-width=".700"/><path d="M5 8.500h5V16l-2.500 1.500L5 16z" fill="#e8e8e8" stroke="#333" stroke-width="1"/><path d="M5 10.500h5M5 12.500h5M5 14.500h5" stroke="#444" stroke-width=".900"/></svg>
<svg style="position:absolute;left:1500px;top:227.5px;" width="17" height="17" viewBox="0 0 17 17"><circle cx="8.500" cy="8.500" r="7.800" fill="#dfe6ee" stroke="#333" stroke-width="1"/><path d="M3 5c1.500-2 3.500-2.500 5-2l-1 2.500 2 1.500-1.500 2.500-2.500.500L4 12.500 2 9.500z" fill="#2f78c0"/><path d="M10.500 2.500c2.500.500 4.500 2.500 5 5l-2 1-1.500-2-2 .500.500-2z" fill="#2f78c0"/><path d="M2.500 12c3 2.500 8.500 3 12 .500" fill="none" stroke="#9aa8b6" stroke-width="1.200"/></svg>
<svg style="position:absolute;left:1500px;top:249.5px;" width="17" height="17" viewBox="0 0 17 17"><path d="M1 4l8-3 7.500 2.500v9.500L9 16.500 1 13z" fill="#c81818" stroke="#7a0808" stroke-width=".800"/><path d="M1 4l8 3 7.500-3.500M9 7v9.500" fill="none" stroke="#8a1010" stroke-width=".700"/><text x="1.800" y="12.800" font-family="Liberation Sans,sans-serif" font-size="7.500" font-weight="bold" fill="#fff" textLength="6.500" lengthAdjust="spacingAndGlyphs">S</text><text x="9.200" y="12.500" font-family="Liberation Sans,sans-serif" font-size="7.500" font-weight="bold" fill="#fff" textLength="6.800" lengthAdjust="spacingAndGlyphs">W</text></svg>
<div style="position:absolute;left:1473px;top:537.8px;width:206px;height:4.6px;background:linear-gradient(180deg,#c4c6cc 0,#c4c6cc 22%,#6e727c 30%,#6e727c 72%,#c0c2c8 80%,#e0e0e4 100%);"></div>
<svg style="position:absolute;left:1495px;top:557px;" width="28.5" height="25.5" viewBox="0 0 28.5 25.5"><defs><linearGradient id="fg1495557" x1="0" y1="0" x2="1" y2="1"><stop offset="0" stop-color="#f6f6f6"/><stop offset=".450" stop-color="#ededed"/><stop offset=".550" stop-color="#d8d8d8"/><stop offset="1" stop-color="#cfcfcf"/></linearGradient></defs><path d="M0.700 24.800V2.500Q0.700 0.700 2.500 0.700H8Q9.500 0.700 10 2.200L10.500 3.500H26Q27.800 3.500 27.800 5.500V24.800Z" fill="#d4d4d4" stroke="#505050" stroke-width="1.200"/><path d="M1.800 24V7.500H26.700V24Z" fill="url(#fg1495557)"/><path d="M1.500 6.500H27" stroke="#fafafa" stroke-width="1.200"/></svg>
<span class="t" style="left:1476.8px;top:588.8px;letter-spacing:0.159px;color:#111;">annotations</span>
<svg style="position:absolute;left:1570px;top:557px;" width="28.5" height="25.5" viewBox="0 0 28.5 25.5"><defs><linearGradient id="fg1570557" x1="0" y1="0" x2="1" y2="1"><stop offset="0" stop-color="#f6f6f6"/><stop offset=".450" stop-color="#ededed"/><stop offset=".550" stop-color="#d8d8d8"/><stop offset="1" stop-color="#cfcfcf"/></linearGradient></defs><path d="M0.700 24.800V2.500Q0.700 0.700 2.500 0.700H8Q9.500 0.700 10 2.200L10.500 3.500H26Q27.800 3.500 27.800 5.500V24.800Z" fill="#d4d4d4" stroke="#505050" stroke-width="1.200"/><path d="M1.800 24V7.500H26.700V24Z" fill="url(#fg1570557)"/><path d="M1.500 6.500H27" stroke="#fafafa" stroke-width="1.200"/></svg>
<span class="t" style="left:1554.8px;top:588.8px;letter-spacing:-0.222px;color:#111;">assemblies</span>
<svg style="position:absolute;left:1495px;top:632px;" width="28.5" height="25.5" viewBox="0 0 28.5 25.5"><defs><linearGradient id="fg1495632" x1="0" y1="0" x2="1" y2="1"><stop offset="0" stop-color="#f6f6f6"/><stop offset=".450" stop-color="#ededed"/><stop offset=".550" stop-color="#d8d8d8"/><stop offset="1" stop-color="#cfcfcf"/></linearGradient></defs><path d="M0.700 24.800V2.500Q0.700 0.700 2.500 0.700H8Q9.500 0.700 10 2.200L10.500 3.500H26Q27.800 3.500 27.800 5.500V24.800Z" fill="#d4d4d4" stroke="#505050" stroke-width="1.200"/><path d="M1.800 24V7.500H26.700V24Z" fill="url(#fg1495632)"/><path d="M1.500 6.500H27" stroke="#fafafa" stroke-width="1.200"/></svg>
<span class="t" style="left:1487.6px;top:663.8px;letter-spacing:-0.069px;color:#111;">features</span>
<svg style="position:absolute;left:1570px;top:632px;" width="28.5" height="25.5" viewBox="0 0 28.5 25.5"><defs><linearGradient id="fg1570632" x1="0" y1="0" x2="1" y2="1"><stop offset="0" stop-color="#f6f6f6"/><stop offset=".450" stop-color="#ededed"/><stop offset=".550" stop-color="#d8d8d8"/><stop offset="1" stop-color="#cfcfcf"/></linearGradient></defs><path d="M0.700 24.800V2.500Q0.700 0.700 2.500 0.700H8Q9.500 0.700 10 2.200L10.500 3.500H26Q27.800 3.500 27.800 5.500V24.800Z" fill="#d4d4d4" stroke="#505050" stroke-width="1.200"/><path d="M1.800 24V7.500H26.700V24Z" fill="url(#fg1570632)"/><path d="M1.500 6.500H27" stroke="#fafafa" stroke-width="1.200"/></svg>
<span class="t" style="left:1561.6px;top:663.8px;letter-spacing:0.527px;color:#111;">forming</span>
<span class="t" style="left:1570.1px;top:678.3px;letter-spacing:0.251px;color:#111;">tools</span>
<svg style="position:absolute;left:1495px;top:707px;" width="28.5" height="25.5" viewBox="0 0 28.5 25.5"><defs><linearGradient id="fg1495707" x1="0" y1="0" x2="1" y2="1"><stop offset="0" stop-color="#f6f6f6"/><stop offset=".450" stop-color="#ededed"/><stop offset=".550" stop-color="#d8d8d8"/><stop offset="1" stop-color="#cfcfcf"/></linearGradient></defs><path d="M0.700 24.800V2.500Q0.700 0.700 2.500 0.700H8Q9.500 0.700 10 2.200L10.500 3.500H26Q27.800 3.500 27.800 5.500V24.800Z" fill="#d4d4d4" stroke="#505050" stroke-width="1.200"/><path d="M1.800 24V7.500H26.700V24Z" fill="url(#fg1495707)"/><path d="M1.500 6.500H27" stroke="#fafafa" stroke-width="1.200"/></svg>
<span class="t" style="left:1489.0px;top:738.8px;letter-spacing:0.547px;color:#111;">motion</span>
<svg style="position:absolute;left:1570px;top:707px;" width="28.5" height="25.5" viewBox="0 0 28.5 25.5"><defs><linearGradient id="fg1570707" x1="0" y1="0" x2="1" y2="1"><stop offset="0" stop-color="#f6f6f6"/><stop offset=".450" stop-color="#ededed"/><stop offset=".550" stop-color="#d8d8d8"/><stop offset="1" stop-color="#cfcfcf"/></linearGradient></defs><path d="M0.700 24.800V2.500Q0.700 0.700 2.500 0.700H8Q9.500 0.700 10 2.200L10.500 3.500H26Q27.800 3.500 27.800 5.500V24.800Z" fill="#d4d4d4" stroke="#505050" stroke-width="1.200"/><path d="M1.800 24V7.500H26.700V24Z" fill="url(#fg1570707)"/><path d="M1.500 6.500H27" stroke="#fafafa" stroke-width="1.200"/></svg>
<span class="t" style="left:1571.0px;top:738.8px;letter-spacing:0.025px;color:#111;">parts</span>
<svg style="position:absolute;left:1495px;top:782px;" width="28.5" height="25.5" viewBox="0 0 28.5 25.5"><defs><linearGradient id="fg1495782" x1="0" y1="0" x2="1" y2="1"><stop offset="0" stop-color="#f6f6f6"/><stop offset=".450" stop-color="#ededed"/><stop offset=".550" stop-color="#d8d8d8"/><stop offset="1" stop-color="#cfcfcf"/></linearGradient></defs><path d="M0.700 24.800V2.500Q0.700 0.700 2.500 0.700H8Q9.500 0.700 10 2.200L10.500 3.500H26Q27.800 3.500 27.800 5.500V24.800Z" fill="#d4d4d4" stroke="#505050" stroke-width="1.200"/><path d="M1.800 24V7.500H26.700V24Z" fill="url(#fg1495782)"/><path d="M1.500 6.500H27" stroke="#fafafa" stroke-width="1.200"/></svg>
<span class="t" style="left:1489.0px;top:813.8px;letter-spacing:0.373px;color:#111;">routing</span>
<svg style="position:absolute;left:1570px;top:782px;" width="28.5" height="25.5" viewBox="0 0 28.5 25.5"><defs><linearGradient id="fg1570782" x1="0" y1="0" x2="1" y2="1"><stop offset="0" stop-color="#f6f6f6"/><stop offset=".450" stop-color="#ededed"/><stop offset=".550" stop-color="#d8d8d8"/><stop offset="1" stop-color="#cfcfcf"/></linearGradient></defs><path d="M0.700 24.800V2.500Q0.700 0.700 2.500 0.700H8Q9.500 0.700 10 2.200L10.500 3.500H26Q27.800 3.500 27.800 5.500V24.800Z" fill="#d4d4d4" stroke="#505050" stroke-width="1.200"/><path d="M1.800 24V7.500H26.700V24Z" fill="url(#fg1570782)"/><path d="M1.500 6.500H27" stroke="#fafafa" stroke-width="1.200"/></svg>
<span class="t" style="left:1568.0px;top:813.8px;letter-spacing:0.160px;color:#111;">smart</span>
<span class="t" style="left:1549.7px;top:828.3px;letter-spacing:0.213px;color:#111;">components</span>
<!-- g_bottom -->
<div style="position:absolute;left:0px;top:975.5px;width:1468px;height:16px;background:#f8f8f8;"></div>
<div style="position:absolute;left:0px;top:973.8px;width:227px;height:1px;background:#b0b0b0;"></div>
<div style="position:absolute;left:0px;top:975.8px;width:1465px;height:1px;background:#8aa0a8;"></div>
<div style="position:absolute;left:1464.2px;top:976px;width:1px;height:15.5px;background:#8aa0a8;"></div>
<div style="position:absolute;left:0px;top:976.5px;width:2.5px;height:14.5px;background:#a8c0c8;"></div>
<div style="position:absolute;left:2.5px;top:976.5px;width:64px;height:14.5px;background:#c8c8c8;border-top:1.500px solid #4a4a4a;box-sizing:border-box;"></div>
<div style="position:absolute;left:3px;top:978px;width:15.5px;height:13px;background:#c4c4c4;border:1px solid #b0b0b0;box-sizing:border-box;"></div>
<div style="position:absolute;left:18.5px;top:978px;width:15.5px;height:13px;background:#c4c4c4;border:1px solid #b0b0b0;box-sizing:border-box;"></div>
<div style="position:absolute;left:34.5px;top:978px;width:15.5px;height:13px;background:#c4c4c4;border:1px solid #b0b0b0;box-sizing:border-box;"></div>
<div style="position:absolute;left:50.5px;top:978px;width:15.5px;height:13px;background:#c4c4c4;border:1px solid #b0b0b0;box-sizing:border-box;"></div>
<svg style="position:absolute;left:5px;top:980px;" width="12" height="9" viewBox="0 0 12 9"><path d="M1.500 0v9" stroke="#a8a8a8" stroke-width="1.300"/><path d="M9 0.500L3 4.500l6 4z" fill="#a8a8a8"/></svg>
<svg style="position:absolute;left:21px;top:980px;" width="10" height="9" viewBox="0 0 10 9"><path d="M7.500 0.500L1.500 4.500l6 4z" fill="#a8a8a8"/></svg>
<svg style="position:absolute;left:38px;top:980px;" width="10" height="9" viewBox="0 0 10 9"><path d="M2 0.500L8 4.500l-6 4z" fill="#a8a8a8"/></svg>
<svg style="position:absolute;left:53px;top:980px;" width="12" height="9" viewBox="0 0 12 9"><path d="M9.500 0v9" stroke="#a8a8a8" stroke-width="1.300"/><path d="M2 0.500L8 4.500l-6 4z" fill="#a8a8a8"/></svg>
<div style="position:absolute;left:66.5px;top:976.5px;width:57px;height:15px;background:#f8f8f8;"></div>
<span class="t" style="left:79.3px;top:975.6px;letter-spacing:0.128px;color:#111;font-weight:bold;">Model</span>
<div style="position:absolute;left:123.4px;top:976.3px;width:68px;height:15.2px;background:#d4d4d4;border:1px solid #8e8e8e;box-sizing:border-box;"></div>
<span class="t" style="left:133.9px;top:975.6px;letter-spacing:-0.396px;color:#111;">3D Views</span>
<div style="position:absolute;left:190.4px;top:976.3px;width:109.5px;height:15.2px;background:#d4d4d4;border:1px solid #8e8e8e;box-sizing:border-box;"></div>
<span class="t" style="left:201.0px;top:975.6px;letter-spacing:0.033px;color:#111;">Motion Study 1</span>
<div style="position:absolute;left:0px;top:991.2px;width:1679px;height:19px;background:#e6e7ee;border-top:1px solid #a8a8a8;box-sizing:border-box;"></div>
<span class="t" style="left:1.0px;top:994.5px;letter-spacing:-0.560px;color:#111;">SOLIDWORKS Premium 2018 SP5.0</span>
<span class="t" style="left:1114.7px;top:994.5px;letter-spacing:-0.060px;color:#111;">79.42mm</span>
<span class="t" style="left:1187.5px;top:994.5px;letter-spacing:-0.060px;color:#111;">52.46mm</span>
<span class="t" style="left:1242.9px;top:994.5px;letter-spacing:0.026px;color:#111;">0.00mm</span>
<span class="t" style="left:1305.5px;top:994.5px;letter-spacing:-0.018px;color:#111;">Fully Defined</span>
<span class="t" style="left:1392.9px;top:994.5px;letter-spacing:-0.172px;color:#111;">Editing Sketch13</span>
<span class="t" style="left:1534.1px;top:994.5px;letter-spacing:-0.182px;color:#a9a9b0;">MMGS</span>
<div style="position:absolute;left:1381.5px;top:993px;width:1px;height:16px;background:#d2d3da;"></div>
<div style="position:absolute;left:1382.5px;top:993px;width:1px;height:16px;background:#f4f4f8;"></div>
<div style="position:absolute;left:1389px;top:993px;width:1px;height:16px;background:#d2d3da;"></div>
<div style="position:absolute;left:1390px;top:993px;width:1px;height:16px;background:#f4f4f8;"></div>
<div style="position:absolute;left:1486.5px;top:993px;width:1px;height:16px;background:#d2d3da;"></div>
<div style="position:absolute;left:1487.5px;top:993px;width:1px;height:16px;background:#f4f4f8;"></div>
<div style="position:absolute;left:1502.5px;top:993px;width:1px;height:16px;background:#d2d3da;"></div>
<div style="position:absolute;left:1503.5px;top:993px;width:1px;height:16px;background:#f4f4f8;"></div>
<svg style="position:absolute;left:1588.5px;top:999.5px;" width="6" height="4" viewBox="0 0 6 4"><path d="M0 4L3 0.300 6 4z" fill="#a0a0a8"/></svg>
<svg style="position:absolute;left:1661px;top:994.5px;" width="18" height="15" viewBox="0 0 18 15"><path d="M1 5l10-4 6.500 5.500v3.500L8 14.500 1 8.500z" fill="#f0f0f0" stroke="#222" stroke-width="1.100"/><path d="M1 5l7 6 9.500-4.500M8 11v3.500" fill="none" stroke="#222" stroke-width="1"/><path d="M6 5.500l4.500-2 3 2.500-4.500 2z" fill="#fff" stroke="#222" stroke-width=".900"/></svg>
</body></html>
